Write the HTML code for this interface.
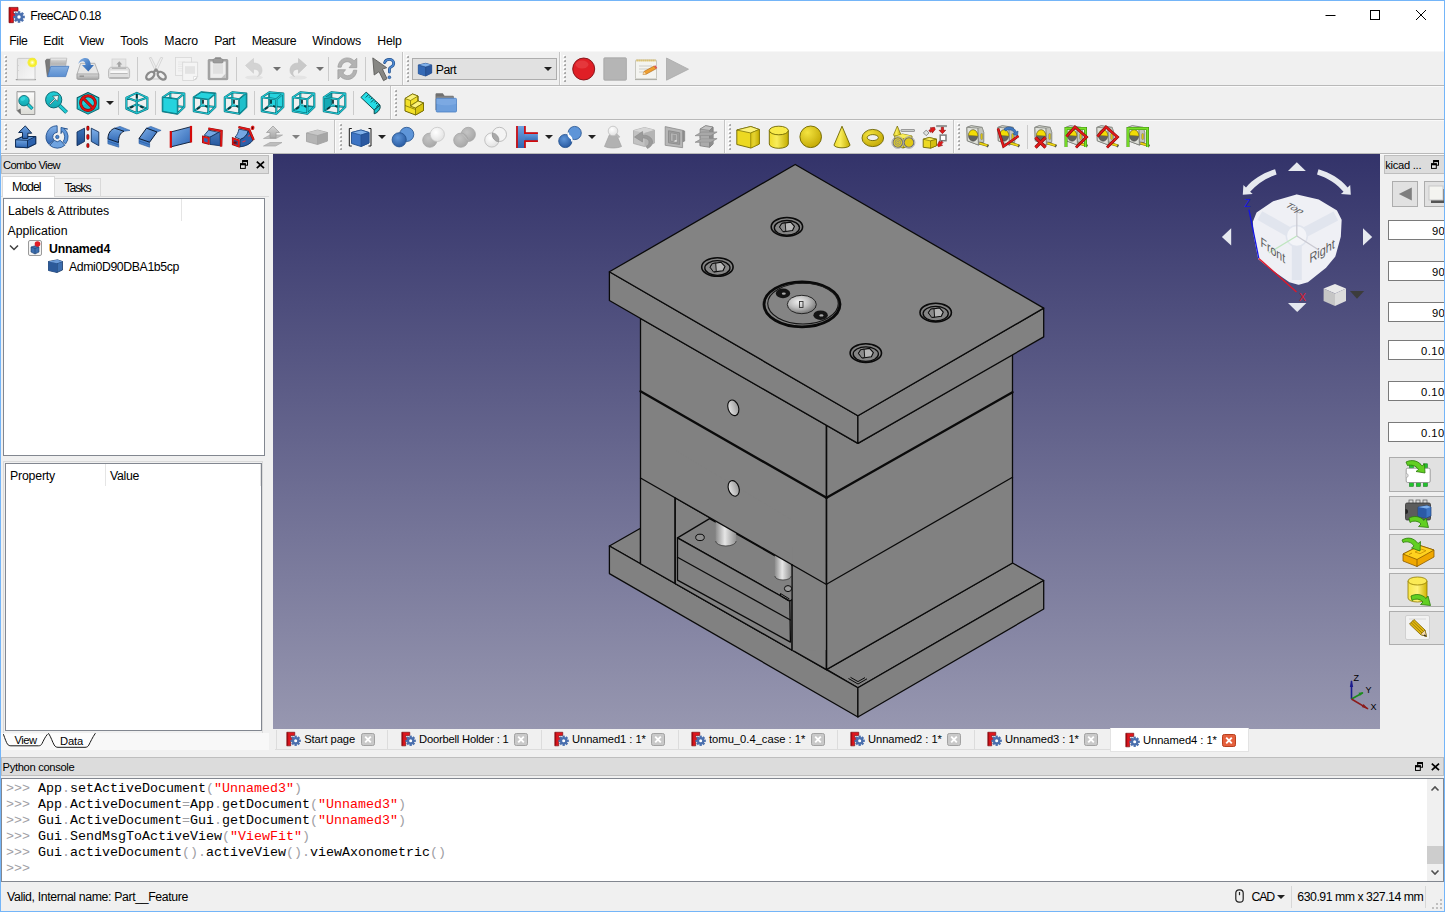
<!DOCTYPE html>
<html lang="en">
<head>
<meta charset="utf-8">
<title>FreeCAD 0.18</title>
<style>
*{box-sizing:border-box}
html,body{margin:0;padding:0}
body{width:1445px;height:912px;position:relative;overflow:hidden;background:#f0f0f0;font-family:"Liberation Sans",sans-serif;font-size:12px;color:#000}
.abs{position:absolute}
.t{position:absolute;white-space:nowrap;line-height:1}
.ui{font-size:12.3px}
.tah{font-size:11.2px}
.ic{position:absolute;width:24px;height:24px;overflow:visible}
.sep{position:absolute;width:1px;height:24px;background:#cbcbcb}
.hnd{position:absolute;width:3px;height:24px;background-image:repeating-linear-gradient(to bottom,#b8b8b8 0,#b8b8b8 1px,transparent 1px,transparent 3px)}
.dd{position:absolute;width:0;height:0;border-left:4px solid transparent;border-right:4px solid transparent;border-top:4px solid #222}
.mono{font-family:"Liberation Mono",monospace;font-size:13.33px}
.g{color:#a0a0a4}
.r{color:#f00}
</style>
</head>
<body>
<div class="abs" style="left:0px;top:0px;width:1445px;height:51px;background:#fff"></div>
<div class="abs" style="left:0px;top:51px;width:1445px;height:1px;background:#f7f7f7"></div>
<div class="abs" style="left:0px;top:85px;width:1445px;height:1px;background:#b9b9b9"></div>
<div class="abs" style="left:0px;top:86px;width:1445px;height:1px;background:#fafafa"></div>
<div class="abs" style="left:0px;top:119px;width:1445px;height:1px;background:#b9b9b9"></div>
<div class="abs" style="left:0px;top:120px;width:1445px;height:1px;background:#fafafa"></div>
<div class="abs" style="left:0px;top:153px;width:1445px;height:1px;background:#b9b9b9"></div>
<div class="abs" style="left:0px;top:154px;width:1445px;height:1px;background:#fafafa"></div>
<svg class="abs" style="left:7px;top:6px" width="18" height="18" viewBox="0 0 18 18">
<path d="M2 1.400h9v3.700H6.400v2.400h3.400v3.300H6.400v5.900H2z" fill="#e0161e" stroke="#6e090d" stroke-width=".7"/><path d="M2.300 1.700h1.300v14.700h-1.300z" fill="#9a0c12"/>
<g transform="translate(12,11)"><circle r="4.100" fill="#4a6fae"/><g fill="#4a6fae"><rect x="-1.300" y="-5.800" width="2.600" height="11.600"/><rect x="-1.300" y="-5.800" width="2.600" height="11.600" transform="rotate(45)"/><rect x="-1.300" y="-5.800" width="2.600" height="11.600" transform="rotate(90)"/><rect x="-1.300" y="-5.800" width="2.600" height="11.600" transform="rotate(135)"/></g><circle r="1.700" fill="#fff"/></g></svg>
<div class="t ui" style="top:10.39px;left:30.30px;font-size:12.3px;letter-spacing:-0.676px;">FreeCAD 0.18</div>
<svg class="abs" style="left:1300px;top:0" width="145" height="30" viewBox="0 0 145 30" fill="none" stroke="#000" stroke-width="1">
<path d="M25.5 15.5h10"/><rect x="70.5" y="10.5" width="9" height="9"/><path d="M116 10l10 10M126 10l-10 10"/></svg>
<div class="t ui" style="top:35.39px;left:9.30px;font-size:12.3px;letter-spacing:-0.455px;">File</div>
<div class="t ui" style="top:35.39px;left:43.20px;font-size:12.3px;letter-spacing:-0.199px;">Edit</div>
<div class="t ui" style="top:35.39px;left:79.00px;font-size:12.3px;letter-spacing:-0.409px;">View</div>
<div class="t ui" style="top:35.39px;left:120.30px;font-size:12.3px;letter-spacing:-0.203px;">Tools</div>
<div class="t ui" style="top:35.39px;left:164.30px;font-size:12.3px;letter-spacing:-0.074px;">Macro</div>
<div class="t ui" style="top:35.39px;left:214.20px;font-size:12.3px;letter-spacing:-0.464px;">Part</div>
<div class="t ui" style="top:35.39px;left:251.70px;font-size:12.3px;letter-spacing:-0.507px;">Measure</div>
<div class="t ui" style="top:35.39px;left:312.20px;font-size:12.3px;letter-spacing:-0.157px;">Windows</div>
<div class="t ui" style="top:35.39px;left:377.30px;font-size:12.3px;letter-spacing:-0.224px;">Help</div>
<div class="abs" style="left:0px;top:0px;width:1445px;height:1px;background:#74b5f8;z-index:50"></div>
<div class="abs" style="left:0px;top:0px;width:1px;height:912px;background:#74b5f8;z-index:50"></div>
<div class="abs" style="left:1444px;top:0px;width:1px;height:912px;background:#74b5f8;z-index:50"></div>
<div class="abs" style="left:0px;top:911px;width:1445px;height:1px;background:#74b5f8;z-index:50"></div>
<svg width="0" height="0" style="position:absolute"><defs>
<linearGradient id="gBlue" x1="0" y1="0" x2="1" y2="1"><stop offset="0" stop-color="#7fb0ea"/><stop offset="1" stop-color="#2f66b3"/></linearGradient>
<linearGradient id="gBlueV" x1="0" y1="0" x2="0" y2="1"><stop offset="0" stop-color="#6fa3e0"/><stop offset="1" stop-color="#2f66b3"/></linearGradient>
<linearGradient id="gYel" x1="0" y1="0" x2="1" y2="0"><stop offset="0" stop-color="#efdc2a"/><stop offset=".4" stop-color="#f8ec5a"/><stop offset="1" stop-color="#c4ad00"/></linearGradient>
<radialGradient id="gYelR" cx=".35" cy=".3" r=".8"><stop offset="0" stop-color="#f4e440"/><stop offset="1" stop-color="#bfa400"/></radialGradient>
<radialGradient id="gBlueR" cx=".4" cy=".35" r=".8"><stop offset="0" stop-color="#5e95d8"/><stop offset="1" stop-color="#1f4f96"/></radialGradient>
<radialGradient id="gGrayR" cx=".4" cy=".35" r=".8"><stop offset="0" stop-color="#c4c4c4"/><stop offset="1" stop-color="#a2a2a2"/></radialGradient>
<radialGradient id="gWhiteR" cx=".4" cy=".35" r=".8"><stop offset="0" stop-color="#ffffff"/><stop offset="1" stop-color="#dcdcdc"/></radialGradient>
<linearGradient id="gPage" x1="0" y1="0" x2="1" y2="1"><stop offset="0" stop-color="#e4e4e4"/><stop offset="1" stop-color="#f8f8f8"/></linearGradient>
<linearGradient id="gGrayV" x1="0" y1="0" x2="0" y2="1"><stop offset="0" stop-color="#d6d6d6"/><stop offset="1" stop-color="#a8a8a8"/></linearGradient>
<g id="tape"><path d="M1.900 2.300l4.300-1.700 10.900 1.700 1.600 5.200v9.200l-5.300 3.300-11.100-4.200z" fill="#d4d6cf" stroke="#6f716b" stroke-width=".8" stroke-linejoin="round"/><path d="M12.800 3.100l4.300-.8 1.600 5.200v9.200l-5.300 3.300z" fill="#c3c5be" stroke="#7b7d77" stroke-width=".5"/><path d="M1.900 2.300l10.900.8.600 16.900-11.100-4.200z" fill="#dfe1da" stroke="#6f716b" stroke-width=".7" stroke-linejoin="round"/><ellipse cx="8.100" cy="10.500" rx="4.600" ry="5.700" fill="#62625e" stroke="#4d4d49" stroke-width=".6"/><path d="M3.500 10.200a4.600 5.700 0 0 1 9.200 .9z" fill="#f3dc05" stroke="#8a7a00" stroke-width=".4"/><rect x="15.700" y="8.500" width="2" height="6" rx=".9" fill="#e5ca00" stroke="#77776f" stroke-width=".5"/><path d="M13.600 17l5.200 .8v1.800" fill="none" stroke="#6f716b" stroke-width=".9"/><path d="M14.600 18.200l8.600 2.500" stroke="#8a7a00" stroke-width="2.600"/><path d="M14.600 18.200l8.600 2.500" stroke="#eed512" stroke-width="1.700"/><path d="M23.400 19.800l-1.300 2.300" stroke="#55554f" stroke-width="1.400"/></g>
</defs></svg>
<svg class="abs" style="left:4px;top:55px" width="4" height="28" viewBox="0 0 4 28"><rect x="0" y="0" width="2" height="2" fill="#fff"/><rect x="1" y="1" width="2" height="2" fill="#a9a9a9"/><rect x="1" y="1" width="1" height="1" fill="#c9c9c9"/><rect x="0" y="4" width="2" height="2" fill="#fff"/><rect x="1" y="5" width="2" height="2" fill="#a9a9a9"/><rect x="1" y="5" width="1" height="1" fill="#c9c9c9"/><rect x="0" y="8" width="2" height="2" fill="#fff"/><rect x="1" y="9" width="2" height="2" fill="#a9a9a9"/><rect x="1" y="9" width="1" height="1" fill="#c9c9c9"/><rect x="0" y="12" width="2" height="2" fill="#fff"/><rect x="1" y="13" width="2" height="2" fill="#a9a9a9"/><rect x="1" y="13" width="1" height="1" fill="#c9c9c9"/><rect x="0" y="16" width="2" height="2" fill="#fff"/><rect x="1" y="17" width="2" height="2" fill="#a9a9a9"/><rect x="1" y="17" width="1" height="1" fill="#c9c9c9"/><rect x="0" y="20" width="2" height="2" fill="#fff"/><rect x="1" y="21" width="2" height="2" fill="#a9a9a9"/><rect x="1" y="21" width="1" height="1" fill="#c9c9c9"/><rect x="0" y="24" width="2" height="2" fill="#fff"/><rect x="1" y="25" width="2" height="2" fill="#a9a9a9"/><rect x="1" y="25" width="1" height="1" fill="#c9c9c9"/></svg>
<svg class="abs" style="left:406px;top:55px" width="4" height="28" viewBox="0 0 4 28"><rect x="0" y="0" width="2" height="2" fill="#fff"/><rect x="1" y="1" width="2" height="2" fill="#a9a9a9"/><rect x="1" y="1" width="1" height="1" fill="#c9c9c9"/><rect x="0" y="4" width="2" height="2" fill="#fff"/><rect x="1" y="5" width="2" height="2" fill="#a9a9a9"/><rect x="1" y="5" width="1" height="1" fill="#c9c9c9"/><rect x="0" y="8" width="2" height="2" fill="#fff"/><rect x="1" y="9" width="2" height="2" fill="#a9a9a9"/><rect x="1" y="9" width="1" height="1" fill="#c9c9c9"/><rect x="0" y="12" width="2" height="2" fill="#fff"/><rect x="1" y="13" width="2" height="2" fill="#a9a9a9"/><rect x="1" y="13" width="1" height="1" fill="#c9c9c9"/><rect x="0" y="16" width="2" height="2" fill="#fff"/><rect x="1" y="17" width="2" height="2" fill="#a9a9a9"/><rect x="1" y="17" width="1" height="1" fill="#c9c9c9"/><rect x="0" y="20" width="2" height="2" fill="#fff"/><rect x="1" y="21" width="2" height="2" fill="#a9a9a9"/><rect x="1" y="21" width="1" height="1" fill="#c9c9c9"/><rect x="0" y="24" width="2" height="2" fill="#fff"/><rect x="1" y="25" width="2" height="2" fill="#a9a9a9"/><rect x="1" y="25" width="1" height="1" fill="#c9c9c9"/></svg>
<svg class="abs" style="left:563px;top:55px" width="4" height="28" viewBox="0 0 4 28"><rect x="0" y="0" width="2" height="2" fill="#fff"/><rect x="1" y="1" width="2" height="2" fill="#a9a9a9"/><rect x="1" y="1" width="1" height="1" fill="#c9c9c9"/><rect x="0" y="4" width="2" height="2" fill="#fff"/><rect x="1" y="5" width="2" height="2" fill="#a9a9a9"/><rect x="1" y="5" width="1" height="1" fill="#c9c9c9"/><rect x="0" y="8" width="2" height="2" fill="#fff"/><rect x="1" y="9" width="2" height="2" fill="#a9a9a9"/><rect x="1" y="9" width="1" height="1" fill="#c9c9c9"/><rect x="0" y="12" width="2" height="2" fill="#fff"/><rect x="1" y="13" width="2" height="2" fill="#a9a9a9"/><rect x="1" y="13" width="1" height="1" fill="#c9c9c9"/><rect x="0" y="16" width="2" height="2" fill="#fff"/><rect x="1" y="17" width="2" height="2" fill="#a9a9a9"/><rect x="1" y="17" width="1" height="1" fill="#c9c9c9"/><rect x="0" y="20" width="2" height="2" fill="#fff"/><rect x="1" y="21" width="2" height="2" fill="#a9a9a9"/><rect x="1" y="21" width="1" height="1" fill="#c9c9c9"/><rect x="0" y="24" width="2" height="2" fill="#fff"/><rect x="1" y="25" width="2" height="2" fill="#a9a9a9"/><rect x="1" y="25" width="1" height="1" fill="#c9c9c9"/></svg>
<svg class="abs" style="left:4px;top:89px" width="4" height="28" viewBox="0 0 4 28"><rect x="0" y="0" width="2" height="2" fill="#fff"/><rect x="1" y="1" width="2" height="2" fill="#a9a9a9"/><rect x="1" y="1" width="1" height="1" fill="#c9c9c9"/><rect x="0" y="4" width="2" height="2" fill="#fff"/><rect x="1" y="5" width="2" height="2" fill="#a9a9a9"/><rect x="1" y="5" width="1" height="1" fill="#c9c9c9"/><rect x="0" y="8" width="2" height="2" fill="#fff"/><rect x="1" y="9" width="2" height="2" fill="#a9a9a9"/><rect x="1" y="9" width="1" height="1" fill="#c9c9c9"/><rect x="0" y="12" width="2" height="2" fill="#fff"/><rect x="1" y="13" width="2" height="2" fill="#a9a9a9"/><rect x="1" y="13" width="1" height="1" fill="#c9c9c9"/><rect x="0" y="16" width="2" height="2" fill="#fff"/><rect x="1" y="17" width="2" height="2" fill="#a9a9a9"/><rect x="1" y="17" width="1" height="1" fill="#c9c9c9"/><rect x="0" y="20" width="2" height="2" fill="#fff"/><rect x="1" y="21" width="2" height="2" fill="#a9a9a9"/><rect x="1" y="21" width="1" height="1" fill="#c9c9c9"/><rect x="0" y="24" width="2" height="2" fill="#fff"/><rect x="1" y="25" width="2" height="2" fill="#a9a9a9"/><rect x="1" y="25" width="1" height="1" fill="#c9c9c9"/></svg>
<svg class="abs" style="left:394px;top:89px" width="4" height="28" viewBox="0 0 4 28"><rect x="0" y="0" width="2" height="2" fill="#fff"/><rect x="1" y="1" width="2" height="2" fill="#a9a9a9"/><rect x="1" y="1" width="1" height="1" fill="#c9c9c9"/><rect x="0" y="4" width="2" height="2" fill="#fff"/><rect x="1" y="5" width="2" height="2" fill="#a9a9a9"/><rect x="1" y="5" width="1" height="1" fill="#c9c9c9"/><rect x="0" y="8" width="2" height="2" fill="#fff"/><rect x="1" y="9" width="2" height="2" fill="#a9a9a9"/><rect x="1" y="9" width="1" height="1" fill="#c9c9c9"/><rect x="0" y="12" width="2" height="2" fill="#fff"/><rect x="1" y="13" width="2" height="2" fill="#a9a9a9"/><rect x="1" y="13" width="1" height="1" fill="#c9c9c9"/><rect x="0" y="16" width="2" height="2" fill="#fff"/><rect x="1" y="17" width="2" height="2" fill="#a9a9a9"/><rect x="1" y="17" width="1" height="1" fill="#c9c9c9"/><rect x="0" y="20" width="2" height="2" fill="#fff"/><rect x="1" y="21" width="2" height="2" fill="#a9a9a9"/><rect x="1" y="21" width="1" height="1" fill="#c9c9c9"/><rect x="0" y="24" width="2" height="2" fill="#fff"/><rect x="1" y="25" width="2" height="2" fill="#a9a9a9"/><rect x="1" y="25" width="1" height="1" fill="#c9c9c9"/></svg>
<svg class="abs" style="left:4px;top:123px" width="4" height="28" viewBox="0 0 4 28"><rect x="0" y="0" width="2" height="2" fill="#fff"/><rect x="1" y="1" width="2" height="2" fill="#a9a9a9"/><rect x="1" y="1" width="1" height="1" fill="#c9c9c9"/><rect x="0" y="4" width="2" height="2" fill="#fff"/><rect x="1" y="5" width="2" height="2" fill="#a9a9a9"/><rect x="1" y="5" width="1" height="1" fill="#c9c9c9"/><rect x="0" y="8" width="2" height="2" fill="#fff"/><rect x="1" y="9" width="2" height="2" fill="#a9a9a9"/><rect x="1" y="9" width="1" height="1" fill="#c9c9c9"/><rect x="0" y="12" width="2" height="2" fill="#fff"/><rect x="1" y="13" width="2" height="2" fill="#a9a9a9"/><rect x="1" y="13" width="1" height="1" fill="#c9c9c9"/><rect x="0" y="16" width="2" height="2" fill="#fff"/><rect x="1" y="17" width="2" height="2" fill="#a9a9a9"/><rect x="1" y="17" width="1" height="1" fill="#c9c9c9"/><rect x="0" y="20" width="2" height="2" fill="#fff"/><rect x="1" y="21" width="2" height="2" fill="#a9a9a9"/><rect x="1" y="21" width="1" height="1" fill="#c9c9c9"/><rect x="0" y="24" width="2" height="2" fill="#fff"/><rect x="1" y="25" width="2" height="2" fill="#a9a9a9"/><rect x="1" y="25" width="1" height="1" fill="#c9c9c9"/></svg>
<svg class="abs" style="left:339px;top:123px" width="4" height="28" viewBox="0 0 4 28"><rect x="0" y="0" width="2" height="2" fill="#fff"/><rect x="1" y="1" width="2" height="2" fill="#a9a9a9"/><rect x="1" y="1" width="1" height="1" fill="#c9c9c9"/><rect x="0" y="4" width="2" height="2" fill="#fff"/><rect x="1" y="5" width="2" height="2" fill="#a9a9a9"/><rect x="1" y="5" width="1" height="1" fill="#c9c9c9"/><rect x="0" y="8" width="2" height="2" fill="#fff"/><rect x="1" y="9" width="2" height="2" fill="#a9a9a9"/><rect x="1" y="9" width="1" height="1" fill="#c9c9c9"/><rect x="0" y="12" width="2" height="2" fill="#fff"/><rect x="1" y="13" width="2" height="2" fill="#a9a9a9"/><rect x="1" y="13" width="1" height="1" fill="#c9c9c9"/><rect x="0" y="16" width="2" height="2" fill="#fff"/><rect x="1" y="17" width="2" height="2" fill="#a9a9a9"/><rect x="1" y="17" width="1" height="1" fill="#c9c9c9"/><rect x="0" y="20" width="2" height="2" fill="#fff"/><rect x="1" y="21" width="2" height="2" fill="#a9a9a9"/><rect x="1" y="21" width="1" height="1" fill="#c9c9c9"/><rect x="0" y="24" width="2" height="2" fill="#fff"/><rect x="1" y="25" width="2" height="2" fill="#a9a9a9"/><rect x="1" y="25" width="1" height="1" fill="#c9c9c9"/></svg>
<svg class="abs" style="left:728px;top:123px" width="4" height="28" viewBox="0 0 4 28"><rect x="0" y="0" width="2" height="2" fill="#fff"/><rect x="1" y="1" width="2" height="2" fill="#a9a9a9"/><rect x="1" y="1" width="1" height="1" fill="#c9c9c9"/><rect x="0" y="4" width="2" height="2" fill="#fff"/><rect x="1" y="5" width="2" height="2" fill="#a9a9a9"/><rect x="1" y="5" width="1" height="1" fill="#c9c9c9"/><rect x="0" y="8" width="2" height="2" fill="#fff"/><rect x="1" y="9" width="2" height="2" fill="#a9a9a9"/><rect x="1" y="9" width="1" height="1" fill="#c9c9c9"/><rect x="0" y="12" width="2" height="2" fill="#fff"/><rect x="1" y="13" width="2" height="2" fill="#a9a9a9"/><rect x="1" y="13" width="1" height="1" fill="#c9c9c9"/><rect x="0" y="16" width="2" height="2" fill="#fff"/><rect x="1" y="17" width="2" height="2" fill="#a9a9a9"/><rect x="1" y="17" width="1" height="1" fill="#c9c9c9"/><rect x="0" y="20" width="2" height="2" fill="#fff"/><rect x="1" y="21" width="2" height="2" fill="#a9a9a9"/><rect x="1" y="21" width="1" height="1" fill="#c9c9c9"/><rect x="0" y="24" width="2" height="2" fill="#fff"/><rect x="1" y="25" width="2" height="2" fill="#a9a9a9"/><rect x="1" y="25" width="1" height="1" fill="#c9c9c9"/></svg>
<svg class="abs" style="left:957px;top:123px" width="4" height="28" viewBox="0 0 4 28"><rect x="0" y="0" width="2" height="2" fill="#fff"/><rect x="1" y="1" width="2" height="2" fill="#a9a9a9"/><rect x="1" y="1" width="1" height="1" fill="#c9c9c9"/><rect x="0" y="4" width="2" height="2" fill="#fff"/><rect x="1" y="5" width="2" height="2" fill="#a9a9a9"/><rect x="1" y="5" width="1" height="1" fill="#c9c9c9"/><rect x="0" y="8" width="2" height="2" fill="#fff"/><rect x="1" y="9" width="2" height="2" fill="#a9a9a9"/><rect x="1" y="9" width="1" height="1" fill="#c9c9c9"/><rect x="0" y="12" width="2" height="2" fill="#fff"/><rect x="1" y="13" width="2" height="2" fill="#a9a9a9"/><rect x="1" y="13" width="1" height="1" fill="#c9c9c9"/><rect x="0" y="16" width="2" height="2" fill="#fff"/><rect x="1" y="17" width="2" height="2" fill="#a9a9a9"/><rect x="1" y="17" width="1" height="1" fill="#c9c9c9"/><rect x="0" y="20" width="2" height="2" fill="#fff"/><rect x="1" y="21" width="2" height="2" fill="#a9a9a9"/><rect x="1" y="21" width="1" height="1" fill="#c9c9c9"/><rect x="0" y="24" width="2" height="2" fill="#fff"/><rect x="1" y="25" width="2" height="2" fill="#a9a9a9"/><rect x="1" y="25" width="1" height="1" fill="#c9c9c9"/></svg>
<div class="sep" style="left:137px;top:57px"></div>
<div class="sep" style="left:236px;top:57px"></div>
<div class="sep" style="left:328px;top:57px"></div>
<div class="sep" style="left:365px;top:57px"></div>
<div class="sep" style="left:118px;top:91px"></div>
<div class="sep" style="left:155px;top:91px"></div>
<div class="sep" style="left:254px;top:91px"></div>
<div class="sep" style="left:353px;top:91px"></div>
<div class="sep" style="left:1027px;top:125px"></div>
<div class="abs" style="left:402px;top:52px;width:1px;height:33px;background:#c4c4c4"></div>
<div class="abs" style="left:403px;top:52px;width:1px;height:33px;background:#fbfbfb"></div>
<div class="abs" style="left:559px;top:52px;width:1px;height:33px;background:#c4c4c4"></div>
<div class="abs" style="left:560px;top:52px;width:1px;height:33px;background:#fbfbfb"></div>
<div class="abs" style="left:390px;top:86px;width:1px;height:33px;background:#c4c4c4"></div>
<div class="abs" style="left:391px;top:86px;width:1px;height:33px;background:#fbfbfb"></div>
<div class="abs" style="left:334px;top:120px;width:1px;height:33px;background:#c4c4c4"></div>
<div class="abs" style="left:335px;top:120px;width:1px;height:33px;background:#fbfbfb"></div>
<div class="abs" style="left:724px;top:120px;width:1px;height:33px;background:#c4c4c4"></div>
<div class="abs" style="left:725px;top:120px;width:1px;height:33px;background:#fbfbfb"></div>
<div class="abs" style="left:953px;top:120px;width:1px;height:33px;background:#c4c4c4"></div>
<div class="abs" style="left:954px;top:120px;width:1px;height:33px;background:#fbfbfb"></div>
<svg class="ic" style="left:14px;top:57px" viewBox="0 0 24 24"><defs><radialGradient id="nwG"><stop offset="0" stop-color="#fff"/><stop offset=".25" stop-color="#fdf98a"/><stop offset=".6" stop-color="#f6ee22"/><stop offset=".85" stop-color="#f6ee22" stop-opacity=".75"/><stop offset="1" stop-color="#f6ee22" stop-opacity="0"/></radialGradient></defs><path d="M2.200 22.600h19.300" stroke="#9e9e9e" stroke-width="1.100" stroke-linecap="round"/><rect x="3.400" y="1.400" width="17.600" height="20.900" rx=".8" fill="url(#gPage)" stroke="#c6c6c6" stroke-width=".9"/><path d="M4 8.500h.9M4 13.500h.9" stroke="#cfcfcf" stroke-width=".8"/><circle cx="18.300" cy="5.500" r="5.300" fill="url(#nwG)"/></svg>
<svg class="ic" style="left:45px;top:57px" viewBox="0 0 24 24"><defs><linearGradient id="opA" x1="0" y1="0" x2="0" y2="1"><stop offset="0" stop-color="#fdfdfd"/><stop offset=".3" stop-color="#c9c9c9"/><stop offset=".7" stop-color="#b4b4b4"/><stop offset="1" stop-color="#d8d8d8"/></linearGradient><linearGradient id="opB" x1="0" y1="0" x2="0" y2="1"><stop offset="0" stop-color="#86afe0"/><stop offset="1" stop-color="#5b8fd1"/></linearGradient></defs><path d="M.4 3.800l1.200-1.600h3.800l-1 17.400h-2.100z" fill="#7a7a7a" stroke="#5e5e5e" stroke-width=".6" stroke-linejoin="round"/><path d="M5.400 1.200h16.400l-1.200 8.500h-15.400z" fill="url(#opA)" stroke="#b0b0b0" stroke-width=".7" stroke-linejoin="round"/><path d="M5.800 9.300h18.100l-3.300 10.300h-17.900z" fill="url(#opB)" stroke="#4678bd" stroke-width=".8" stroke-linejoin="round"/></svg>
<svg class="ic" style="left:76px;top:57px" viewBox="0 0 24 24"><defs><linearGradient id="svA" x1="0" y1="0" x2="1" y2="1"><stop offset="0" stop-color="#8fb6e6"/><stop offset=".5" stop-color="#4a82c8"/><stop offset="1" stop-color="#2a5fa8"/></linearGradient></defs><path d="M4.600 6.300h14.200l3.900 10.600v4.400q0 1-1 1h-19.600q-1 0-1-1v-4.400z" fill="#e6e6e6" stroke="#a4a4a4" stroke-width=".8" stroke-linejoin="round"/><path d="M1.100 16.900h21.600v4.400q0 1-1 1h-19.600q-1 0-1-1z" fill="url(#gGrayV)" stroke="#9a9a9a" stroke-width=".7"/><path d="M3.500 19.200h4.500" stroke="#8e8e8e" stroke-width="1.300"/><path d="M2.200 7c1.200-4 4-6.300 7.400-6.100 3 .2 4.800 2.500 5.200 7.100h3.100l-5.600 6.400-6.400-6.400h3.600c0-2.500-1-3.800-2.700-3.800-1.700 0-3.300 1-4.600 2.800z" fill="url(#svA)"/></svg>
<svg class="ic" style="left:107px;top:57px" viewBox="0 0 24 24"><rect x="5" y="2" width="13.900" height="9" fill="#e6e6e6" stroke="#d2d2d2" stroke-width=".8"/><path d="M12.300 4.300l3 3.300h-1.800v2.600h-2.400v-2.600h-1.800z" fill="#a4a4a4"/><path d="M3.500 10.300h17.100q2 1.200 2 3.500v5.700q0 2-2 2h-17.100q-2 0-2-2v-5.700q0-2.300 2-3.500z" fill="#dedede" stroke="#b4b4b4" stroke-width=".8"/><path d="M5 10.800h14v1.200h-14z" fill="#b8b8b8"/><path d="M3.300 13.600h17.300v2.600h-17.300z" fill="#f8f8f8"/><path d="M3.300 16.500h17.300" stroke="#b0b0b0" stroke-width=".8"/><path d="M2.500 20.800h19.100" stroke="#b2b2b2" stroke-width="1.400"/></svg>
<svg class="ic" style="left:143px;top:57px" viewBox="0 0 24 24"><path d="M6.300 .8l1.900-.4 6.300 12.800-1.800 1.600z" fill="#ededed" stroke="#c4c4c4" stroke-width=".6"/><path d="M19.700 .8l-1.900-.4-6.300 12.800 1.800 1.600z" fill="#f1f1f1" stroke="#c4c4c4" stroke-width=".6"/><ellipse cx="12.800" cy="22" rx="5" ry="1" fill="#dcdcdc"/><ellipse cx="7.300" cy="18.700" rx="4.700" ry="3" transform="rotate(-42 7.300 18.700)" fill="none" stroke="#8b8b8b" stroke-width="2.400"/><ellipse cx="18.700" cy="18.700" rx="4.700" ry="3" transform="rotate(42 18.700 18.700)" fill="none" stroke="#8b8b8b" stroke-width="2.400"/><path d="M10.300 15.800l2.700-3.400 2.700 3.400" stroke="#8b8b8b" stroke-width="2.400" fill="none" stroke-linejoin="round"/></svg>
<svg class="ic" style="left:174px;top:57px" viewBox="0 0 24 24"><rect x="1.400" y=".5" width="16" height="18" fill="#f3f3f3" stroke="#d6d6d6" stroke-width=".8"/><path d="M4 5h7M4 7.200h7M4 9.400h7M4 11.600h7M4 13.800h5" stroke="#e2e2e2" stroke-width=".7"/><path d="M8.600 5.200h15v14.300l-4 4h-11z" fill="#f4f4f4" stroke="#d4d4d4" stroke-width=".8"/><rect x="11" y="9.200" width="10" height="7.600" fill="#e3e3e3"/><path d="M23.600 19.500l-4 4v-4z" fill="#fdfdfd" stroke="#d0d0d0" stroke-width=".6"/><path d="M23.400 19.700l-3.600 3.600c2.500-.3 3.500-1.300 3.600-3.600z" fill="#cfcfcf"/></svg>
<svg class="ic" style="left:205px;top:57px" viewBox="0 0 24 24"><rect x="3.200" y="2.500" width="19.600" height="20.200" rx=".8" fill="#a3a3a3" stroke="#959595" stroke-width=".8"/><rect x="5.300" y="4.500" width="15.400" height="16.400" fill="#eeeeee"/><rect x="8" y="7.200" width="10" height="9.600" fill="#e0e0e0"/><path d="M20.700 16.500v4.400h-4.400z" fill="#c2c2c2"/><path d="M8 3.600c0-1.300.8-2.100 2.100-2.100h5.800c1.300 0 2.100.8 2.100 2.100v1.500c0 .6-.4 1-1 1h-8c-.6 0-1-.4-1-1z" fill="#9c9c9c" stroke="#868686" stroke-width=".6"/><rect x="10" y=".2" width="6" height="1.800" rx=".5" fill="#8a8a8a"/></svg>
<svg class="ic" style="left:242px;top:57px" viewBox="0 0 24 24"><ellipse cx="12" cy="20.500" rx="9" ry="2" fill="#e4e4e4"/><path d="M3.500 8.500l8-7v4.500c6 0 8.500 3.500 8.500 7.500 0 3-2 5-4.500 6 1.500-1.500 2-3 1.500-4.500-.6-2-2.500-2.800-5.500-2.800v4z" fill="#d3d3d3" stroke="#cbcbcb" stroke-width=".6" stroke-linejoin="round"/></svg>
<svg class="ic" style="left:286px;top:57px" viewBox="0 0 24 24"><ellipse cx="12" cy="20.500" rx="9" ry="2" fill="#e4e4e4"/><path d="M20.500 8.500l-8-7v4.500c-6 0-8.500 3.500-8.500 7.500 0 3 2 5 4.500 6-1.500-1.500-2-3-1.500-4.500.6-2 2.500-2.800 5.500-2.800v4z" fill="#c9c9c9" stroke="#bfbfbf" stroke-width=".6" stroke-linejoin="round"/></svg>
<svg class="ic" style="left:335px;top:57px" viewBox="0 0 24 24"><g id="rfa"><path d="M2.900 10.200C3.300 4.600 7.400 .9 12.200 .9c2.900 0 5.200 1.100 6.900 2.900l2.700-2.500v9.400h-7.700l2.700-3.300c-1.200-1.700-2.700-2.700-4.700-2.700-3 0-5.300 2.100-5.900 5.500z" fill="#b3b3b3" stroke="#9b9b9b" stroke-width=".7" stroke-linejoin="round"/></g><use href="#rfa" transform="rotate(180 12.350 11.700)"/></svg>
<svg class="ic" style="left:371px;top:57px" viewBox="0 0 24 24"><path d="M1.800 .9l13.900 9.800-4.300 1.400 4.600 9.600-3.500 2-4.500-9.100-4.800 3.400z" fill="#878784" stroke="#5c5c5a" stroke-width=".9" stroke-linejoin="round"/><path d="M13.600 5.600c.7-2 2.400-3.200 4.700-3.200 2.600 0 4.400 1.600 4.400 3.900 0 1.900-1.200 3-2.700 3.700-1.200.5-1.600 1-1.600 2.200v2.800" fill="none" stroke="#1f4e8c" stroke-width="2.800" stroke-linecap="round" stroke-linejoin="round"/><path d="M13.600 5.600c.7-2 2.400-3.200 4.700-3.200 2.600 0 4.400 1.600 4.400 3.900 0 1.900-1.200 3-2.700 3.700-1.200.5-1.600 1-1.600 2.200v2.800" fill="none" stroke="#4f8ad2" stroke-width="1.500" stroke-linecap="round" stroke-linejoin="round"/><circle cx="18.400" cy="20.300" r="1.400" fill="#4f8ad2" stroke="#1f4e8c" stroke-width=".7"/></svg>
<div class="dd" style="left:273px;top:67px;border-top-color:#707070"></div>
<div class="dd" style="left:316px;top:67px;border-top-color:#707070"></div>
<div class="abs" style="left:412px;top:58px;width:145px;height:22px;background:#e1e1e1;border:1px solid #adadad"></div>
<svg class="abs" style="left:417px;top:61px" width="16" height="16" viewBox="0 0 24 24"><path d="M2 6l11-2.500 9 2.500v12l-9 4.500-11-3.500z" fill="#3d74c4" stroke="#1c3f78" stroke-width="1.200" stroke-linejoin="round"/><path d="M2 6l11 3v13.500l-11-3.500z" fill="#3469b5"/><path d="M13 9l9-3v12l-9 4.500z" fill="#2a58a0"/><path d="M2 6l11-2.500 9 2.500-9 3z" fill="#7fb0ea"/><path d="M2 6l11 3 9-3M13 9v13.500" stroke="#1c3f78" stroke-width=".9" fill="none"/></svg>
<div class="t ui" style="top:63.89px;left:435.70px;font-size:12.3px;letter-spacing:-0.514px;">Part</div>
<div class="dd" style="left:543.500px;top:67px"></div>
<svg class="ic" style="left:572px;top:57px" viewBox="0 0 24 24"><circle cx="11.700" cy="12" r="11" fill="#df1f26" stroke="#7e1015" stroke-width=".9"/><ellipse cx="10" cy="7.500" rx="6.500" ry="4" fill="#ea4a4f" opacity=".55"/></svg>
<svg class="ic" style="left:603px;top:57px" viewBox="0 0 24 24"><rect x=".8" y=".8" width="22.600" height="22.400" rx="1" fill="#b5b5b5" stroke="#a5a5a5" stroke-width=".8"/></svg>
<svg class="ic" style="left:634px;top:57px" viewBox="0 0 24 24"><rect x="1.500" y="3" width="21" height="19" rx="1" fill="#f4f4f0" stroke="#bdbdb5" stroke-width=".8"/><path d="M1 22.500h22" stroke="#b0b0a8" stroke-width="1.200"/><path d="M2.500 3.500h19" stroke="#d9b64a" stroke-width="2.200" stroke-dasharray="1.200 .8"/><path d="M5 9h13M5 12h11M5 15h7" stroke="#c9c9c4" stroke-width=".9"/><path d="M9 17.500l1-3 10-5.500 2 2.800-10 5.500z" fill="#f0a030" stroke="#a86010" stroke-width=".6"/><path d="M20 9l1.300-.7 2 2.800-1.300.7z" fill="#e05050"/><path d="M9 17.500l1-3 2 2.800z" fill="#f4dcb0"/></svg>
<svg class="ic" style="left:665px;top:57px" viewBox="0 0 24 24"><path d="M1.500 1l22 11.200-22 11z" fill="#b7b7b7" stroke="#a9a9a9" stroke-width=".8" stroke-linejoin="round"/></svg>
<svg class="ic" style="left:14px;top:91px" viewBox="0 0 24 24"><defs><linearGradient id="faP" x1="0" y1="0" x2="0" y2="1"><stop offset="0" stop-color="#fdfdfd"/><stop offset="1" stop-color="#dcdcd6"/></linearGradient><linearGradient id="teG" x1="0" y1="0" x2="0" y2="1"><stop offset="0" stop-color="#22d0d8"/><stop offset="1" stop-color="#13a6b0"/></linearGradient></defs><path d="M3 .5h17.800v23h-13.800l-4-4z" fill="url(#faP)" stroke="#8f8f8f" stroke-width=".9" stroke-linejoin="round"/><path d="M3.500 1h16.800" stroke="#b9b9b9" stroke-width="1"/><path d="M3 19.500l3.600-2 .4 6z" fill="#6e6e6e"/><path d="M13.800 13.300l4.600 4.600" stroke="#0a6a73" stroke-width="3.400"/><path d="M13.400 12.900l4.800 4.800" stroke="#1fc9d2" stroke-width="2.200"/><circle cx="10" cy="9.700" r="5.200" fill="url(#teG)" stroke="#0a6a73" stroke-width=".9"/><ellipse cx="9" cy="8" rx="2.600" ry="1.700" fill="#4fe0e8" opacity=".55" transform="rotate(-30 9 8)"/></svg>
<svg class="ic" style="left:45px;top:91px" viewBox="0 0 24 24"><path d="M14.300 14.400l7.300 7" stroke="#0a6a73" stroke-width="4"/><path d="M13.800 13.900l7.600 7.300" stroke="#1fc9d2" stroke-width="2.700"/><circle cx="8.700" cy="8.800" r="8.100" fill="url(#teG)" stroke="#0a6a73" stroke-width="1"/><path d="M4.300 12.700l5.500-5.300-2.200-2.200 6-.8-1 6-2-2-5.400 5.200z" fill="#f6f6f6" stroke="#2a5a5e" stroke-width=".7" stroke-linejoin="round"/></svg>
<svg class="ic" style="left:76px;top:91px" viewBox="0 0 24 24"><path d="M12 1.500l10.800 5.200v11l-10.800 5.300-10.800-5.300V6.700z" fill="#22d2dc" stroke="#0a5a62" stroke-width="1.100" stroke-linejoin="round"/><path d="M.8 17.400l11.200-5.600 11.200 5.600-11.200 5.800z" fill="#17aeb9" opacity=".6"/><circle cx="12" cy="12.100" r="7.400" fill="none" stroke="#7a0808" stroke-width="2.900"/><path d="M6.800 6.900l10.400 10.400" stroke="#7a0808" stroke-width="2.900"/><circle cx="12" cy="12.100" r="7.400" fill="none" stroke="#e01212" stroke-width="1.900"/><path d="M6.800 6.900l10.400 10.400" stroke="#e01212" stroke-width="1.900"/></svg>
<svg class="ic" style="left:125px;top:91px" viewBox="0 0 24 24"><path d="M11.800 1.900v11.600M1.400 17.800l10.400-4.400 10.600 4.400" stroke="#0a6a73" stroke-width="2" fill="none"/><path d="M11.800 1.900v11.600M1.400 17.800l10.400-4.400 10.600 4.400" stroke="#20c5d0" stroke-width="1" fill="none"/><path d="M11.800 3.300v3.200" stroke="#0a3438" stroke-width="1.800" stroke-linecap="round"/><path d="M5.800 16.500l2-.8M17.800 16.500l-2-.8" stroke="#0a3438" stroke-width="1.900" stroke-linecap="round"/><path d="M11.800 1.900l10.600 4.700v11.200l-10.600 4.500-10.400-4.500V6.600zM1.400 6.600l10.400 3.600 10.600-3.600M11.800 10.200v12" stroke="#0a6a73" stroke-width="2.100" fill="none" stroke-linejoin="round"/><path d="M11.800 1.900l10.600 4.700v11.200l-10.600 4.500-10.400-4.500V6.600zM1.400 6.600l10.400 3.600 10.600-3.600M11.800 10.200v12" stroke="#20c5d0" stroke-width="1.100" fill="none" stroke-linejoin="round"/></svg>
<svg class="ic" style="left:161px;top:91px" viewBox="0 0 24 24"><path d="M9.3 1.3L9.3 14.5L23.3 16M9.3 14.5L1.8 20.3" stroke="#0a6a73" stroke-width="2" fill="none" stroke-linejoin="round"/><path d="M9.3 1.3L9.3 14.5L23.3 16M9.3 14.5L1.8 20.3" stroke="#20c5d0" stroke-width="1" fill="none" stroke-linejoin="round"/><path d="M1.8 6.3L16.3 8.3L16.3 22.8L1.8 20.3ZM1.8 6.3L9.3 1.3L23.3 2.5L23.3 16L16.3 22.8M16.3 8.3L23.3 2.5" stroke="#0a6a73" stroke-width="2.100" fill="none" stroke-linejoin="round"/><path d="M1.8 6.3L16.3 8.3L16.3 22.8L1.8 20.3ZM1.8 6.3L9.3 1.3L23.3 2.5L23.3 16L16.3 22.8M16.3 8.3L23.3 2.5" stroke="#20c5d0" stroke-width="1.100" fill="none" stroke-linejoin="round"/><polygon points="1.8,6.3 16.3,8.3 16.3,22.8 1.8,20.3" fill="#25d3de" stroke="#0a6a73" stroke-width=".8" stroke-linejoin="round"/></svg>
<svg class="ic" style="left:192px;top:91px" viewBox="0 0 24 24"><path d="M9.3 1.3L9.3 14.5L23.3 16M9.3 14.5L1.8 20.3" stroke="#0a6a73" stroke-width="2" fill="none" stroke-linejoin="round"/><path d="M9.3 1.3L9.3 14.5L23.3 16M9.3 14.5L1.8 20.3" stroke="#20c5d0" stroke-width="1" fill="none" stroke-linejoin="round"/><path d="M11 12v-2.500" stroke="#0a3438" stroke-width="1.800" stroke-linecap="round"/><path d="M7.500 16.500l-1.800 1.200" stroke="#0a3438" stroke-width="1.800" stroke-linecap="round"/><path d="M13.800 15.200l1.500.7" stroke="#0a3438" stroke-width="1.800" stroke-linecap="round"/><path d="M11 13.500l-2 1.500M11 13.500l1.800 1" stroke="#35d7e2" stroke-width="1"/><path d="M1.8 6.3L16.3 8.3L16.3 22.8L1.8 20.3ZM1.8 6.3L9.3 1.3L23.3 2.5L23.3 16L16.3 22.8M16.3 8.3L23.3 2.5" stroke="#0a6a73" stroke-width="2.100" fill="none" stroke-linejoin="round"/><path d="M1.8 6.3L16.3 8.3L16.3 22.8L1.8 20.3ZM1.8 6.3L9.3 1.3L23.3 2.5L23.3 16L16.3 22.8M16.3 8.3L23.3 2.5" stroke="#20c5d0" stroke-width="1.100" fill="none" stroke-linejoin="round"/><polygon points="1.8,6.3 16.3,8.3 23.3,2.5 9.3,1.3" fill="#25d3de" stroke="#0a6a73" stroke-width=".8" stroke-linejoin="round"/></svg>
<svg class="ic" style="left:223px;top:91px" viewBox="0 0 24 24"><path d="M9.3 1.3L9.3 14.5L23.3 16M9.3 14.5L1.8 20.3" stroke="#0a6a73" stroke-width="2" fill="none" stroke-linejoin="round"/><path d="M9.3 1.3L9.3 14.5L23.3 16M9.3 14.5L1.8 20.3" stroke="#20c5d0" stroke-width="1" fill="none" stroke-linejoin="round"/><path d="M11 12v-2.500" stroke="#0a3438" stroke-width="1.800" stroke-linecap="round"/><path d="M7.500 16.500l-1.800 1.200" stroke="#0a3438" stroke-width="1.800" stroke-linecap="round"/><path d="M13.800 15.200l1.500.7" stroke="#0a3438" stroke-width="1.800" stroke-linecap="round"/><path d="M11 13.500l-2 1.500M11 13.500l1.800 1" stroke="#35d7e2" stroke-width="1"/><path d="M1.8 6.3L16.3 8.3L16.3 22.8L1.8 20.3ZM1.8 6.3L9.3 1.3L23.3 2.5L23.3 16L16.3 22.8M16.3 8.3L23.3 2.5" stroke="#0a6a73" stroke-width="2.100" fill="none" stroke-linejoin="round"/><path d="M1.8 6.3L16.3 8.3L16.3 22.8L1.8 20.3ZM1.8 6.3L9.3 1.3L23.3 2.5L23.3 16L16.3 22.8M16.3 8.3L23.3 2.5" stroke="#20c5d0" stroke-width="1.100" fill="none" stroke-linejoin="round"/><polygon points="16.3,8.3 23.3,2.5 23.3,16 16.3,22.8" fill="#1fc0cb" stroke="#0a6a73" stroke-width=".8" stroke-linejoin="round"/></svg>
<svg class="ic" style="left:260px;top:91px" viewBox="0 0 24 24"><path d="M9.3 1.3L9.3 14.5L23.3 16M9.3 14.5L1.8 20.3" stroke="#0a6a73" stroke-width="2" fill="none" stroke-linejoin="round"/><path d="M9.3 1.3L9.3 14.5L23.3 16M9.3 14.5L1.8 20.3" stroke="#20c5d0" stroke-width="1" fill="none" stroke-linejoin="round"/><polygon points="9.3,1.3 23.3,2.5 23.3,16 9.3,14.5" fill="#25d3de" stroke="#0a6a73" stroke-width=".8"/><path d="M11 12v-2.500" stroke="#0a3438" stroke-width="1.800" stroke-linecap="round"/><path d="M7.500 16.500l-1.800 1.200" stroke="#0a3438" stroke-width="1.800" stroke-linecap="round"/><path d="M13.800 15.200l1.500.7" stroke="#0a3438" stroke-width="1.800" stroke-linecap="round"/><path d="M11 13.500l-2 1.500M11 13.500l1.800 1" stroke="#35d7e2" stroke-width="1"/><path d="M1.8 6.3L16.3 8.3L16.3 22.8L1.8 20.3ZM1.8 6.3L9.3 1.3L23.3 2.5L23.3 16L16.3 22.8M16.3 8.3L23.3 2.5" stroke="#0a6a73" stroke-width="2.100" fill="none" stroke-linejoin="round"/><path d="M1.8 6.3L16.3 8.3L16.3 22.8L1.8 20.3ZM1.8 6.3L9.3 1.3L23.3 2.5L23.3 16L16.3 22.8M16.3 8.3L23.3 2.5" stroke="#20c5d0" stroke-width="1.100" fill="none" stroke-linejoin="round"/></svg>
<svg class="ic" style="left:291px;top:91px" viewBox="0 0 24 24"><path d="M9.3 1.3L9.3 14.5L23.3 16M9.3 14.5L1.8 20.3" stroke="#0a6a73" stroke-width="2" fill="none" stroke-linejoin="round"/><path d="M9.3 1.3L9.3 14.5L23.3 16M9.3 14.5L1.8 20.3" stroke="#20c5d0" stroke-width="1" fill="none" stroke-linejoin="round"/><polygon points="1.8,20.3 16.3,22.8 23.3,16 9.3,14.5" fill="#25d3de" stroke="#0a6a73" stroke-width=".8"/><path d="M11 12v-2.500" stroke="#0a3438" stroke-width="1.800" stroke-linecap="round"/><path d="M7.500 16.500l-1.800 1.200" stroke="#0a3438" stroke-width="1.800" stroke-linecap="round"/><path d="M13.800 15.200l1.500.7" stroke="#0a3438" stroke-width="1.800" stroke-linecap="round"/><path d="M11 13.500l-2 1.500M11 13.500l1.800 1" stroke="#35d7e2" stroke-width="1"/><path d="M1.8 6.3L16.3 8.3L16.3 22.8L1.8 20.3ZM1.8 6.3L9.3 1.3L23.3 2.5L23.3 16L16.3 22.8M16.3 8.3L23.3 2.5" stroke="#0a6a73" stroke-width="2.100" fill="none" stroke-linejoin="round"/><path d="M1.8 6.3L16.3 8.3L16.3 22.8L1.8 20.3ZM1.8 6.3L9.3 1.3L23.3 2.5L23.3 16L16.3 22.8M16.3 8.3L23.3 2.5" stroke="#20c5d0" stroke-width="1.100" fill="none" stroke-linejoin="round"/></svg>
<svg class="ic" style="left:322px;top:91px" viewBox="0 0 24 24"><path d="M9.3 1.3L9.3 14.5L23.3 16M9.3 14.5L1.8 20.3" stroke="#0a6a73" stroke-width="2" fill="none" stroke-linejoin="round"/><path d="M9.3 1.3L9.3 14.5L23.3 16M9.3 14.5L1.8 20.3" stroke="#20c5d0" stroke-width="1" fill="none" stroke-linejoin="round"/><polygon points="1.8,6.3 9.3,1.3 9.3,14.5 1.8,20.3" fill="#16aab5" stroke="#0a6a73" stroke-width=".8"/><path d="M11 12v-2.500" stroke="#0a3438" stroke-width="1.800" stroke-linecap="round"/><path d="M7.500 16.500l-1.800 1.200" stroke="#0a3438" stroke-width="1.800" stroke-linecap="round"/><path d="M13.800 15.200l1.500.7" stroke="#0a3438" stroke-width="1.800" stroke-linecap="round"/><path d="M11 13.500l-2 1.500M11 13.500l1.800 1" stroke="#35d7e2" stroke-width="1"/><path d="M1.8 6.3L16.3 8.3L16.3 22.8L1.8 20.3ZM1.8 6.3L9.3 1.3L23.3 2.5L23.3 16L16.3 22.8M16.3 8.3L23.3 2.5" stroke="#0a6a73" stroke-width="2.100" fill="none" stroke-linejoin="round"/><path d="M1.8 6.3L16.3 8.3L16.3 22.8L1.8 20.3ZM1.8 6.3L9.3 1.3L23.3 2.5L23.3 16L16.3 22.8M16.3 8.3L23.3 2.5" stroke="#20c5d0" stroke-width="1.100" fill="none" stroke-linejoin="round"/></svg>
<svg class="ic" style="left:359px;top:91px" viewBox="0 0 24 24"><path d="M7.200 1.100L1.900 6.400 15.200 19 21 14.100z" fill="#25dde6" stroke="#063d42" stroke-width=".9" stroke-linejoin="round"/><path d="M15.200 19L21 14.100l.2 2.600c-.7 2.800-3.200 5.300-6 6.100z" fill="#17c0ca" stroke="#063d42" stroke-width=".9" stroke-linejoin="round"/><path d="M9.700 3.500l-3 3M11.500 5.200l-1.500 1.500M13.200 6.800l-1.500 1.500M15 8.400l-3 3M16.700 10l-1.500 1.500M18.400 11.600l-1.500 1.500M20 13.200l-2.500 2.500" stroke="#063d42" stroke-width=".9"/></svg>
<svg class="ic" style="left:402px;top:91px" viewBox="0 0 24 24"><path d="M3 7.500l7.500-4.500 5.500 2v5l5.500 2v7.500l-8 4.500-10.500-4z" fill="#f2e02a" stroke="#6e6500" stroke-width="1" stroke-linejoin="round"/><path d="M3 7.500l5.500 2 7.500-4.500-5.500-2z" fill="#fbf27a" stroke="#6e6500" stroke-width=".7" stroke-linejoin="round"/><path d="M8.500 9.500v5.500l5 2 8-5-5.500-2-7.500 4.500" fill="none" stroke="#6e6500" stroke-width=".7"/><path d="M8.500 15l5 2 8-5-5.500-2z" fill="#fbf27a" stroke="#6e6500" stroke-width=".7" stroke-linejoin="round"/><path d="M13.500 17v7l8-4.500v-7.500z" fill="#d9c610" stroke="#6e6500" stroke-width=".7" stroke-linejoin="round"/><path d="M3 14.500l10.500 4M16 5v5" stroke="#6e6500" stroke-width=".7"/></svg>
<svg class="ic" style="left:433px;top:91px" viewBox="0 0 24 24"><path d="M2.500 3.500c0-.8.500-1.300 1.300-1.300h6l1.700 2.500h8c.8 0 1.300.5 1.300 1.300v13h-18.300z" fill="#707070"/><path d="M3.500 5.500h17v3h-17z" fill="#8a8a8a"/><rect x="3.200" y="7.300" width="20.300" height="13.700" rx="1" fill="#6e9fdc" stroke="#4a7fc2" stroke-width=".8"/><path d="M3.500 7.800h19.700v5c-7 2-13 2-19.700 0z" fill="#86b1e6" opacity=".6"/></svg>
<div class="dd" style="left:105.500px;top:101px"></div>
<svg class="ic" style="left:14px;top:125px" viewBox="0 0 24 24"><path d="M1.600 14.800l7.300-3.300h12.800v7.200l-8.200 4-11.900-.7z" fill="#5a93d8" stroke="#0e2a52" stroke-width="1.100" stroke-linejoin="round"/><path d="M1.600 14.800l11.900 .6v7.300l-11.900-.7z" fill="url(#gBlueV)" stroke="#0e2a52" stroke-width=".8" stroke-linejoin="round"/><path d="M13.500 15.400l8.200-3.900v7.200l-8.200 4z" fill="#2c62ae" stroke="#0e2a52" stroke-width=".8" stroke-linejoin="round"/><path d="M11.300 .9l6.400 7.300h-3.900v5.200h-5.300v-5.900h-3.900z" fill="url(#gBlueV)" stroke="#0e2a52" stroke-width="1" stroke-linejoin="round"/></svg>
<svg class="ic" style="left:45px;top:125px" viewBox="0 0 24 24"><defs><linearGradient id="rvG" x1="0" y1="0" x2="0" y2="1"><stop offset="0" stop-color="#86b4ea"/><stop offset="1" stop-color="#3368b4"/></linearGradient></defs><path d="M12.10 0.75A11.2 11.2 0 0 0 3.98 19.44L8.88 15.03A4.6 4.6 0 0 1 12.22 7.35Z" fill="url(#rvG)" stroke="#1f4e8c" stroke-width=".9" stroke-linejoin="round"/><path d="M4.81 20.27A11.2 11.2 0 0 0 19.79 20.27L15.38 15.37A4.6 4.6 0 0 1 9.22 15.37Z" fill="#6fa3e0" stroke="#1f4e8c" stroke-width=".9" stroke-linejoin="round"/><path d="M20.57 18.89A10.8 10.8 0 0 0 18.95 3.44L22.7 4.1 16 2.4 16 8.6 16.86 6.12A7.4 7.4 0 0 1 17.97 16.71Z" fill="#5f97da" stroke="#1f4e8c" stroke-width=".8" stroke-linejoin="round"/><circle cx="12.3" cy="11.95" r="1.700" fill="#4a86cf" stroke="#1f4e8c" stroke-width=".7"/></svg>
<svg class="ic" style="left:76px;top:125px" viewBox="0 0 24 24"><defs><linearGradient id="miA" x1="0" y1="0" x2="0" y2="1"><stop offset="0" stop-color="#3a72b8"/><stop offset="1" stop-color="#1d4a8a"/></linearGradient><linearGradient id="miB" x1="0" y1="0" x2="0" y2="1"><stop offset="0" stop-color="#7fb0ea"/><stop offset="1" stop-color="#3a72b8"/></linearGradient></defs><path d="M1 7l7.500-3.800v13.300l-7.500 4.200z" fill="url(#miA)" stroke="#12305c" stroke-width=".9" stroke-linejoin="round"/><path d="M15.300 3.200l7.500 3.800v13.700l-7.500-4.200z" fill="url(#miB)" stroke="#12305c" stroke-width=".9" stroke-linejoin="round"/><g stroke-linecap="round"><path d="M11.900 2.300v1.900M11.900 10.600v2.700M11.900 19.700v1.700" stroke="#6a0000" stroke-width="2.900"/><path d="M11.900 2.300v1.900M11.900 10.600v2.700M11.900 19.700v1.700" stroke="#d40a0a" stroke-width="1.900"/></g></svg>
<svg class="ic" style="left:107px;top:125px" viewBox="0 0 24 24"><path d="M7.700 3.200l5.300-1.800 10 4-6 .9z" fill="#4f88d0" stroke="#2c5c9e" stroke-width=".6" stroke-linejoin="round"/><path d="M.9 13.800l10.600 3.700 .3 4.700-10.900-3.400z" fill="#4a82c8" stroke="#2c5c9e" stroke-width=".6" stroke-linejoin="round"/><path d="M.9 16.300l10.700 3.500" stroke="#2f66b3" stroke-width="1"/><path d="M.9 13.800c.2-5.500 2.500-9 6.800-10.600l9.300 3.100c-3.800 1.500-5.600 5.200-5.500 11.200z" fill="url(#gBlueV)" stroke="#0b1c36" stroke-width="1" stroke-linejoin="round"/></svg>
<svg class="ic" style="left:138px;top:125px" viewBox="0 0 24 24"><path d="M8.500 3.200l4.300-1.800 10.300 4-4.100 1.600z" fill="#4f88d0" stroke="#2c5c9e" stroke-width=".6" stroke-linejoin="round"/><path d="M1 13.500l10.600 3.700v5l-10.600-3.700z" fill="#4a82c8" stroke="#2c5c9e" stroke-width=".6" stroke-linejoin="round"/><path d="M1 16l10.600 3.700" stroke="#2f66b3" stroke-width="1"/><path d="M1 13.500l7.500-10.300 10.500 3.800-7.400 10.200z" fill="url(#gBlue)" stroke="#0b1c36" stroke-width="1" stroke-linejoin="round"/></svg>
<svg class="ic" style="left:169px;top:125px" viewBox="0 0 24 24"><path d="M1.800 7l20.200-5.300v15.200l-20.200 5z" fill="url(#gBlue)" stroke="#0b1c36" stroke-width=".9"/><path d="M1.800 6v16.800" stroke="#d40a0a" stroke-width="2.200"/><path d="M22 .9v16.600" stroke="#d40a0a" stroke-width="2.200"/></svg>
<svg class="ic" style="left:200px;top:125px" viewBox="0 0 24 24"><path d="M4.200 10.300l4.400-5.200 10.200 2.300-8.800 4.800z" fill="#75a7e3" stroke="#0e2a52" stroke-width=".8" stroke-linejoin="round"/><path d="M10 12.200l9.800-5.300 .6 13.900-10.400-1.400z" fill="url(#gBlueV)" stroke="#0e2a52" stroke-width=".8" stroke-linejoin="round"/><path d="M10 12.200l9.800-5.300 .6 13.900-10.400-1.400z" fill="#1d4a8a" opacity=".45"/><path d="M8.400 3.600l13.100 2.500-.4 15.400" fill="none" stroke="#8a0808" stroke-width="2.400" stroke-linejoin="miter"/><path d="M8.400 3.600l13.100 2.500-.4 15.400" fill="none" stroke="#e21818" stroke-width="1.500" stroke-linejoin="miter"/><path d="M3.200 11.900l5.200 1.200v5.300l-5.200-1.300z" fill="#2f66b3" stroke="#8a0808" stroke-width="2.400" stroke-linejoin="miter"/><path d="M3.200 11.900l5.200 1.200v5.300l-5.200-1.300z" fill="#2f66b3" stroke="#e21818" stroke-width="1.500" stroke-linejoin="miter"/></svg>
<svg class="ic" style="left:231px;top:125px" viewBox="0 0 24 24"><path d="M4 12c2-1.800 3.300-4.500 3.900-7.900l9.300 1.800c-.8 4-3.500 7-7.800 8.500z" fill="#75a7e3" stroke="#0e2a52" stroke-width=".8" stroke-linejoin="round"/><path d="M9.400 14.400c4.300-1.500 7-4.500 7.800-8.500l5 9c-2.500 3.800-7 6.300-13.300 7z" fill="#2c60aa" stroke="#0e2a52" stroke-width=".8" stroke-linejoin="round"/><path d="M11.500 17l3-1.300M17.500 11.500l1.300-1.500" stroke="#e2344a" stroke-width="1.200"/><path d="M7.500 2.200l10.600 2.300 4.500 10.400" fill="none" stroke="#8a0808" stroke-width="2.400"/><path d="M7.500 2.200l10.600 2.300 4.500 10.400" fill="none" stroke="#e21818" stroke-width="1.500"/><path d="M2.100 13.700l5.400 1.900v5.500l-5.400-2z" fill="#24508f" stroke="#8a0808" stroke-width="2.400" stroke-linejoin="miter"/><path d="M2.100 13.700l5.400 1.900v5.500l-5.400-2z" fill="#24508f" stroke="#e21818" stroke-width="1.500" stroke-linejoin="miter"/><path d="M2.500 17.600h3.200" stroke="#8a0000" stroke-width="2"/><ellipse cx="21.600" cy="2.800" rx="1.300" ry="1.700" transform="rotate(20 21.600 2.800)" fill="#5a0000" stroke="#e21818" stroke-width="1.100"/></svg>
<svg class="ic" style="left:262px;top:125px" viewBox="0 0 24 24"><path d="M1.500 21l6.500-3.500h12l-6.500 3.500z" fill="#bdbdbd" stroke="#a6a6a6" stroke-width=".7"/><path d="M1.500 13.500l6.500-3.500h12.500l-6.500 3.500z" fill="#bfbfbf" stroke="#a6a6a6" stroke-width=".7"/><path d="M11 1l6.500 6.500h-3.500v5.500h-6v-5.500h-3.500z" fill="url(#gGrayV)" stroke="#a0a0a0" stroke-width=".8" stroke-linejoin="round"/></svg>
<svg class="ic" style="left:305px;top:125px" viewBox="0 0 24 24"><path d="M1.500 8l11-3 10 2.500v8.500l-10 3.500-11-3z" fill="#b4b4b4" stroke="#a0a0a0" stroke-width=".8" stroke-linejoin="round"/><path d="M1.500 8l11 2.500 10-3-10-2.500z" fill="#c8c8c8"/><path d="M12.500 10.500l10-3v8.500l-10 3.500z" fill="#a6a6a6"/><path d="M12.500 10.500v9M1.500 8l11 2.500 10-3" stroke="#a0a0a0" stroke-width=".7" fill="none"/></svg>
<svg class="ic" style="left:348px;top:125px" viewBox="0 0 24 24"><path d="M3.800 3.500h-2.500v17.500h2.500M20.500 3.500h2.500v17.500h-2.500" fill="none" stroke="#1a1a1a" stroke-width="1"/><path d="M3.500 7.500l9.500-2.500 8 2.500v10.500l-8 3.500-9.500-3z" fill="#3d74c4" stroke="#1f4e8c" stroke-width=".9" stroke-linejoin="round"/><path d="M3.500 7.500l9.500 2.500 8-2.500-8-2.500z" fill="#7fb0ea" stroke="#1f4e8c" stroke-width=".7" stroke-linejoin="round"/><path d="M13 10v11.500l8-3.500v-10.500z" fill="#2a58a0" stroke="#1f4e8c" stroke-width=".7" stroke-linejoin="round"/></svg>
<svg class="ic" style="left:390px;top:125px" viewBox="0 0 24 24"><circle cx="16.7" cy="9.4" r="7.1" fill="#5e95d8" stroke="#1f4e8c" stroke-width=".8"/><circle cx="9.2" cy="14.8" r="7.1" fill="url(#gBlueR)" stroke="#1f4e8c" stroke-width=".8"/></svg>
<svg class="ic" style="left:421px;top:125px" viewBox="0 0 24 24"><circle cx="8.8" cy="15.2" r="7.1" fill="url(#gGrayR)" stroke="#a8a8a8" stroke-width=".8"/><circle cx="16.3" cy="9.4" r="7.1" fill="url(#gWhiteR)" stroke="#c6c6c6" stroke-width=".8"/></svg>
<svg class="ic" style="left:452px;top:125px" viewBox="0 0 24 24"><circle cx="16.3" cy="9.4" r="7.1" fill="url(#gGrayR)" stroke="#a6a6a6" stroke-width=".8"/><circle cx="8.8" cy="15.2" r="7.1" fill="url(#gGrayR)" stroke="#a6a6a6" stroke-width=".8"/><path d="M10 8.500l6 7" stroke="#c0c0c0" stroke-width=".8"/></svg>
<svg class="ic" style="left:483px;top:125px" viewBox="0 0 24 24"><circle cx="8.800" cy="15" r="7.100" fill="url(#gWhiteR)" stroke="#b8b8b8" stroke-width=".8"/><circle cx="16.400" cy="9.400" r="7.100" fill="#f6f6f6" fill-opacity=".6" stroke="#b0b0b0" stroke-width=".8"/><path d="M9.500 8a7.100 7.100 0 0 1 6.200 8.800a7.100 7.100 0 0 1 -6.200 -8.800z" fill="#a9a9a9" stroke="#909090" stroke-width=".6"/></svg>
<svg class="ic" style="left:514px;top:125px" viewBox="0 0 24 24"><rect x="2.200" y="1" width="9.400" height="22" fill="url(#gBlueV)"/><rect x="11" y="7.400" width="12.900" height="9.400" fill="url(#gBlueV)"/><path d="M3 1v22M10.900 1v7.200h13M10.900 23v-6.900h13" fill="none" stroke="#d40a0a" stroke-width="1.700"/></svg>
<svg class="ic" style="left:558px;top:125px" viewBox="0 0 24 24"><circle cx="7.300" cy="16" r="6.600" fill="url(#gBlueR)" stroke="#1f4e8c" stroke-width=".8"/><circle cx="16.700" cy="8" r="6.600" fill="#5e95d8" stroke="#1f4e8c" stroke-width=".8"/><path d="M10.200 10a6.600 6.600 0 0 1 3.700 6.500" fill="none" stroke="#fff" stroke-width="1.600"/><path d="M13.700 13.800a6.600 6.600 0 0 1 -3.500-6.300" fill="none" stroke="#fff" stroke-width="1.600"/></svg>
<svg class="ic" style="left:601px;top:125px" viewBox="0 0 24 24"><path d="M8.500 9.500h7l5 12c-5 2-12 2-17 0z" fill="#b2b2b2" stroke="#a2a2a2" stroke-width=".7"/><circle cx="12" cy="6" r="4.800" fill="url(#gWhiteR)" stroke="#c0c0c0" stroke-width=".8"/><path d="M15 9l3.500 3.500" stroke="#b8b8b8" stroke-width="2"/></svg>
<svg class="ic" style="left:632px;top:125px" viewBox="0 0 24 24"><path d="M1.500 5.500l11-3 10 2.500v13l-10 3.500-11-3z" fill="#c2c2c2" stroke="#aaa" stroke-width=".8" stroke-linejoin="round"/><path d="M1.500 5.500l11 2.500 10-3-10-2.500z" fill="#d6d6d6"/><path d="M12.500 8l10-3v13l-10 3.500z" fill="#b4b4b4"/><path d="M2.500 12l8-5.500v3.500c6 0 10 3 10 7 0 3-2 5-5 6.500l-1.500-2c2-1 3-2.500 3-4.500 0-2.500-2.500-4-6.500-4v4z" fill="#9a9a9a" stroke="#8a8a8a" stroke-width=".6" stroke-linejoin="round"/></svg>
<svg class="ic" style="left:663px;top:125px" viewBox="0 0 24 24"><path d="M19.600 5.300l2.100 .8v10l-2.100 .8z" fill="#8e8e8e" stroke="#808080" stroke-width=".6"/><path d="M2.200 1.600l17.400 3.700v17.400l-17.400-2.400z" fill="#b6b6b6" stroke="#8c8c8c" stroke-width=".8" stroke-linejoin="round"/><path d="M5.500 5.700l11.200 2.100v11.600l-11.200-1.600z" fill="#a0a0a0" stroke="#868686" stroke-width=".8" stroke-linejoin="round"/><path d="M7.600 7.800l7.100 1.200v8.300l-7.100-1.200z" fill="#b9b9b9" stroke="#8a8a8a" stroke-width=".7" stroke-linejoin="round"/><path d="M9.500 9.500l3.600 .6v6.200l-3.600-.6z" fill="#9a9a9a"/><path d="M10.500 16.200l3-1.500v2z" fill="#ededed"/></svg>
<svg class="ic" style="left:694px;top:125px" viewBox="0 0 24 24"><path d="M6.100 4.100l5.500-3.400 7.400 1.400v17l-3.400 3.200-9.500-1.500z" fill="#ababab" stroke="#7e7e7e" stroke-width=".8" stroke-linejoin="round"/><path d="M6.100 4.100l9.500 1.300 3.400-3.300-7.400-1.400z" fill="#c2c2c2" stroke="#7e7e7e" stroke-width=".6" stroke-linejoin="round"/><path d="M15.600 5.400l3.400-3.300v17l-3.400 3.200z" fill="#8e8e8e" stroke="#7e7e7e" stroke-width=".6" stroke-linejoin="round"/><path d="M1.100 10.700l6.600-3.700h15.400l-6.200 3.700z" fill="#a8a8a8" stroke="#8a8a8a" stroke-width=".7" stroke-linejoin="round"/><path d="M1.100 17.300l6.600-3.700h15.400l-6.200 3.700z" fill="#a8a8a8" stroke="#8a8a8a" stroke-width=".7" stroke-linejoin="round"/><path d="M6.100 10.900h9.500v2.500h-9.500zM6.100 17.500h9.500v3.800l-9.500-1.400z" fill="#ababab"/><path d="M15.600 10.900l1.300-.2 2.100-1.300v3l-3.400 1z M15.600 17.500l1.300-.2 2.100-1.300v3l-3.400 3.300z" fill="#8e8e8e"/><path d="M6.100 11v2.400M15.600 11v2.400M6.100 17.500v3.300M15.600 17.500v4" stroke="#7e7e7e" stroke-width=".7"/></svg>
<svg class="ic" style="left:736px;top:125px" viewBox="0 0 24 24"><path d="M.800 5l14-3.500 8.500 3v14.500l-8.500 4-14-3.500z" fill="#ecd922" stroke="#6e6500" stroke-width=".9" stroke-linejoin="round"/><path d="M.800 5l14 3 8.500-3.500-8.500-3z" fill="#fbf27a" stroke="#6e6500" stroke-width=".7" stroke-linejoin="round"/><path d="M14.800 8v15l8.500-4v-14.500z" fill="url(#gYel)" stroke="#6e6500" stroke-width=".7" stroke-linejoin="round"/><path d="M14.800 8v15l8.500-4v-14.500z" fill="#c9b200" opacity=".45"/></svg>
<svg class="ic" style="left:767px;top:125px" viewBox="0 0 24 24"><path d="M2.300 5.500v13.500a9.500 4.300 0 0 0 19 0V5.500z" fill="url(#gYel)" stroke="#6e6500" stroke-width=".9"/><ellipse cx="11.800" cy="5.500" rx="9.500" ry="4.300" fill="#f8ea4a" stroke="#6e6500" stroke-width=".9"/></svg>
<svg class="ic" style="left:798px;top:125px" viewBox="0 0 24 24"><circle cx="12.700" cy="11.800" r="10.800" fill="url(#gYelR)" stroke="#6e6500" stroke-width=".9"/></svg>
<svg class="ic" style="left:829px;top:125px" viewBox="0 0 24 24"><path d="M13 1.200l-8 18.800a8 2.800 0 0 0 16 0z" fill="url(#gYel)" stroke="#6e6500" stroke-width=".9" stroke-linejoin="round"/></svg>
<svg class="ic" style="left:860px;top:125px" viewBox="0 0 24 24"><ellipse cx="12.800" cy="13" rx="10.800" ry="8.600" fill="url(#gYelR)" stroke="#6e6500" stroke-width=".9"/><ellipse cx="12.800" cy="12.600" rx="5.600" ry="3" fill="#f0f0f0" stroke="#6e6500" stroke-width=".9"/></svg>
<svg class="ic" style="left:891px;top:125px" viewBox="0 0 24 24"><path d="M6.300 1l-3.800 9a3.800 1.300 0 0 0 7.600 0z" fill="url(#gYel)" stroke="#6e6500" stroke-width=".7"/><path d="M10.800 5.500h12" stroke="#7d7d7d" stroke-width="2.400" stroke-linecap="round"/><path d="M10.800 5.500h12" stroke="#c9cdc9" stroke-width="1.200" stroke-linecap="round"/><path d="M3.500 11.500l8-2.500 9.500 2v9.500l-9 2.500-8.500-2z" fill="#ecd922" stroke="#6e6500" stroke-width=".8" stroke-linejoin="round"/><path d="M3.500 11.500l9 1.500 8.500-2-9.500-2z" fill="#f8ec5a"/><path d="M12.500 13v10" stroke="#6e6500" stroke-width=".5"/><circle cx="6.800" cy="17.500" r="4.800" fill="#e9d31f" stroke="#6f6f6f" stroke-width="1.100"/><circle cx="6.800" cy="17.500" r="2.800" fill="none" stroke="#8a8a80" stroke-width=".9"/><circle cx="6.800" cy="17.500" r="1.200" fill="none" stroke="#8a8a80" stroke-width=".8"/><circle cx="18" cy="17.500" r="4.800" fill="#e2c914" stroke="#6f6f6f" stroke-width="1.100"/><circle cx="18" cy="17.500" r="5.900" fill="none" stroke="#a8a8a8" stroke-width=".9"/><circle cx="6.800" cy="17.500" r="5.900" fill="none" stroke="#a8a8a8" stroke-width=".9"/></svg>
<svg class="ic" style="left:922px;top:125px" viewBox="0 0 24 24"><path d="M1.200 14.200l6-1.700 7.300 1.700v6.500l-6 2.500-7.300-.9z" fill="#ecd922" stroke="#6e6500" stroke-width=".9" stroke-linejoin="round"/><path d="M1.200 14.200l7.300 1.700 6-1.700-7.300-1.700z" fill="#f8ec5a" stroke="#6e6500" stroke-width=".6" stroke-linejoin="round"/><path d="M8.500 15.900v7.300l6-2.500v-6.500z" fill="#d4bf10" stroke="#6e6500" stroke-width=".6" stroke-linejoin="round"/><path d="M14.300 1.100h10.500" stroke="#7d7d7d" stroke-width="2"/><path d="M14.800 1.100h9.500" stroke="#b9bdb9" stroke-width=".8"/><path d="M19.300 2.300h2.200v3h2.200l-3.300 3.400-3.300-3.400h2.200z" fill="#e21a1a" stroke="#8a0a0a" stroke-width=".6" stroke-linejoin="round"/><rect x="18.200" y="10.100" width="5.800" height="5.600" fill="#fff" stroke="#7c7c7c" stroke-width="1.500"/><path d="M4.200 5.100l2.800 2.800-2.800 2.800-2.800-2.800z" fill="#dfe3e0" stroke="#808080" stroke-width=".9"/><path d="M7.200 5l1.300 2 1.700-1 .3 1.800 3-3.600-.7-2.200-4.500 .6 1.500 1.200z" fill="#e21a1a" stroke="#8a0a0a" stroke-width=".6" stroke-linejoin="round" transform="translate(-.3,.3)"/><path d="M21 17.500l-1.400-1.600-1.400 1.400-.8-1.400-2 4.200 1 1.600 4.200-1.400-1.500-.8z" fill="#e21a1a" stroke="#8a0a0a" stroke-width=".6" stroke-linejoin="round"/></svg>
<svg class="ic" style="left:965px;top:125px" viewBox="0 0 24 24"><use href="#tape"/></svg>
<svg class="ic" style="left:996px;top:125px" viewBox="0 0 24 24"><use href="#tape"/><path d="M8 4c4-3.500 10-2.500 12.500 3l1.500-1-.5 5-4.500-2 1.500-1c-2-3.500-6-4-9-2z" fill="#3f78c0" stroke="#1f4e8c" stroke-width=".6"/><path d="M2 3.500l5.500 18 15-10.500" fill="none" stroke="#8a0a0a" stroke-width="2.600"/><path d="M2 3.500l5.500 18 15-10.500" fill="none" stroke="#e21a1a" stroke-width="1.600"/></svg>
<svg class="ic" style="left:1033px;top:125px" viewBox="0 0 24 24"><use href="#tape"/><path d="M2.500 12.500l10 10M12.500 12.500l-10 10" stroke="#8a0a0a" stroke-width="3.200"/><path d="M2.500 12.500l10 10M12.500 12.500l-10 10" stroke="#e21a1a" stroke-width="2"/></svg>
<svg class="ic" style="left:1064px;top:125px" viewBox="0 0 24 24"><use href="#tape"/><path d="M2 22V3.500h19.500V22" fill="none" stroke="#3a8a0a" stroke-width="3"/><path d="M2 22V3.500h19.500V22" fill="none" stroke="#7be02a" stroke-width="1.800"/><path d="M2.500 11.500l8.500-9.500 11.500 10-10.500 10.500" fill="none" stroke="#8a0a0a" stroke-width="2.800" stroke-linejoin="miter"/><path d="M2.500 11.500l8.500-9.500 11.500 10-10.500 10.500" fill="none" stroke="#e21a1a" stroke-width="1.700" stroke-linejoin="miter"/></svg>
<svg class="ic" style="left:1095px;top:125px" viewBox="0 0 24 24"><use href="#tape"/><path d="M2.500 11.500l8.500-9.500 11.500 10-10.500 10.500" fill="none" stroke="#8a0a0a" stroke-width="2.800" stroke-linejoin="miter"/><path d="M2.500 11.500l8.500-9.500 11.500 10-10.500 10.500" fill="none" stroke="#e21a1a" stroke-width="1.700" stroke-linejoin="miter"/></svg>
<svg class="ic" style="left:1126px;top:125px" viewBox="0 0 24 24"><use href="#tape"/><path d="M2 22V3.500h19.500V22" fill="none" stroke="#3a8a0a" stroke-width="3"/><path d="M2 22V3.500h19.500V22" fill="none" stroke="#7be02a" stroke-width="1.800"/></svg>
<div class="dd" style="left:291.500px;top:135px;border-top-color:#808080"></div>
<div class="dd" style="left:377.5px;top:135px"></div>
<div class="dd" style="left:544.5px;top:135px"></div>
<div class="dd" style="left:588px;top:135px"></div>
<div class="abs" style="left:1px;top:155px;width:268px;height:19px;background:#dcdcdc;border:1px solid #bebebe"></div>
<div class="t tah" style="top:159.72px;left:3.00px;font-size:11.2px;letter-spacing:-0.629px;">Combo View</div>
<svg class="abs" style="left:240px;top:160px" width="9" height="10" viewBox="0 0 9 10"><rect x="2.7" y=".6" width="4.800" height="4.600" fill="none" stroke="#000" stroke-width="1"/><rect x="2.200" y=".1" width="5.800" height="2" fill="#000"/><rect x=".5" y="3.800" width="4.800" height="4.600" fill="#e8e8e8" stroke="#000" stroke-width="1"/><rect x="0" y="3.300" width="5.800" height="2" fill="#000"/></svg>
<svg class="abs" style="left:255.5px;top:160.7px" width="9" height="8" viewBox="0 0 9 8"><path d="M.8 .6l7.200 6.600M8 .6l-7.200 6.600" stroke="#000" stroke-width="1.700" fill="none"/></svg>
<div class="abs" style="left:1px;top:196px;width:268px;height:1px;background:#d9d9d9"></div>
<div class="abs" style="left:2px;top:176px;width:53px;height:21px;background:#fff;border:1px solid #d9d9d9;border-bottom:none"></div>
<div class="abs" style="left:55px;top:178px;width:46px;height:18px;background:#f0f0f0;border:1px solid #d9d9d9;border-bottom:none;border-left:none"></div>
<div class="t ui" style="top:181.09px;left:12.00px;font-size:12.3px;letter-spacing:-1.000px;">Model</div>
<div class="t ui" style="top:181.89px;left:64.50px;font-size:12.3px;letter-spacing:-1.088px;">Tasks</div>
<div class="abs" style="left:3px;top:198px;width:262px;height:258px;background:#fff;border:1px solid #828790"></div>
<div class="abs" style="left:181px;top:199px;width:1px;height:22px;background:#e5e5e5"></div>
<div class="t ui" style="top:205.49px;left:8.00px;font-size:12.3px;letter-spacing:-0.082px;">Labels &amp; Attributes</div>
<div class="t ui" style="top:225.49px;left:7.50px;font-size:12.3px;letter-spacing:-0.015px;">Application</div>
<svg class="abs" style="left:9px;top:244px" width="10" height="8" viewBox="0 0 10 8" fill="none" stroke="#404040" stroke-width="1.500"><path d="M1 1.500l4 4 4-4"/></svg>
<svg class="abs" style="left:28px;top:240px" width="15" height="16" viewBox="0 0 15 16">
<rect x=".5" y=".5" width="13" height="15" rx="1.5" fill="#f4f4f4" stroke="#9a9a9a"/>
<path d="M3 7l5-1.5 3 1.5v5l-4 2-4-2z" fill="#3d6fb0" stroke="#1f3f6f" stroke-width=".6"/><path d="M3 7l4 1.6 4-1.600M7 8.600v5.400" stroke="#1f3f6f" stroke-width=".6" fill="none"/>
<circle cx="9.500" cy="4" r="2.800" fill="#e01b24"/></svg>
<div class="t ui" style="top:243.49px;left:49.00px;font-size:12.3px;font-weight:bold;letter-spacing:-0.235px;">Unnamed4</div>
<svg class="abs" style="left:47px;top:258px" width="17" height="16" viewBox="0 0 17 16">
<path d="M1.500 3.500l9-1.700 5 1.700v8.500l-5.500 2.500-8.500-2z" fill="#3d6fb0" stroke="#1b3a66" stroke-width=".8"/>
<path d="M1.500 3.500l8.500 1.800 5.500-1.800M10 5.300v9.200" stroke="#1b3a66" stroke-width=".8" fill="none"/><path d="M1.500 3.500l8.500 1.800v9.200l-8.500-2z" fill="#2c5a9a"/><path d="M1.500 3.500l9-1.700 5 1.700-5.500 1.800z" fill="#6b9bd8"/></svg>
<div class="t ui" style="top:261.29px;left:69.00px;font-size:12.3px;letter-spacing:-0.389px;">Admi0D90DBA1b5cp</div>
<div class="abs" style="left:3px;top:461px;width:260px;height:273px;background:#f0f0f0;border:1px solid #dadada"></div>
<div class="abs" style="left:5px;top:463px;width:257px;height:268px;background:#fff;border:1px solid #828790"></div>
<div class="abs" style="left:105px;top:464px;width:1px;height:22px;background:#e5e5e5"></div>
<div class="abs" style="left:260px;top:464px;width:1px;height:22px;background:#e5e5e5"></div>
<div class="t ui" style="top:470.49px;left:10.00px;font-size:12.3px;letter-spacing:-0.185px;">Property</div>
<div class="t ui" style="top:470.49px;left:110.00px;font-size:12.3px;letter-spacing:-0.309px;">Value</div>
<div class="abs" style="left:1px;top:733px;width:268px;height:17px;background:#f8f8f8"></div>
<svg class="abs" style="left:0px;top:730px" width="110" height="22" viewBox="0 0 110 22" fill="#fdfdfd" stroke="#1a1a1a" stroke-width="1">
<path d="M3.400 4.200c1.800 5 2.800 8 4 9.800 1 1.400 2 1.800 3.500 1.800h27.500c1.800 0 2.800-.6 3.600-2.200 1.500-3 3-6.500 5.500-9.400"/><path d="M48.400 3.200c2.800 4 3.800 8.500 5.800 11.800 1 1.600 2 2.300 3.800 2.300h27c1.800 0 3-.6 3.800-2.200 1.800-3.500 3.600-7.500 6.600-11.900"/></svg>
<div class="t tah" style="top:735.42px;left:14.50px;font-size:11.2px;letter-spacing:-0.518px;">View</div>
<div class="t tah" style="top:736.42px;left:60.00px;font-size:11.2px;letter-spacing:-0.164px;">Data</div>
<svg class="abs" style="left:273px;top:154px" width="1107" height="574.500" viewBox="273 154 1107 574.500">
<defs><linearGradient id="bg" x1="0" y1="0" x2="0" y2="1"><stop offset="0" stop-color="#33336a"/><stop offset="1" stop-color="#9797b0"/></linearGradient><linearGradient id="pin" x1="0" y1="0" x2="1" y2="0"><stop offset="0" stop-color="#8c8c8c"/><stop offset=".45" stop-color="#e6e6e6"/><stop offset="1" stop-color="#909090"/></linearGradient><radialGradient id="dome" cx=".4" cy=".35" r=".7"><stop offset="0" stop-color="#f0f0f0"/><stop offset=".5" stop-color="#bdbdbd"/><stop offset="1" stop-color="#6e6e6e"/></radialGradient><linearGradient id="hole" x1="0" y1="0" x2="1" y2="0"><stop offset="0" stop-color="#e4e4e4"/><stop offset="1" stop-color="#9a9a9a"/></linearGradient></defs>
<rect x="273" y="154" width="1107" height="575" fill="url(#bg)"/>
<polygon points="609.4,546.0 640.5,528.3 640.5,563.7" fill="#818181" stroke="#0a0a0a" stroke-width="1.3" stroke-linejoin="round" />
<polygon points="826.5,669.4 857.9,687.8 1043.7,580.5 1012.5,563.0" fill="#818181" stroke="#0a0a0a" stroke-width="1.3" stroke-linejoin="round" />
<polygon points="609.4,546.0 857.9,687.8 857.9,717.0 609.4,573.6" fill="#818181" stroke="#0a0a0a" stroke-width="1.3" stroke-linejoin="round" />
<polygon points="857.9,687.8 1043.7,580.5 1043.7,609.0 857.9,717.0" fill="#818181" stroke="#0a0a0a" stroke-width="1.3" stroke-linejoin="round" />
<polygon points="640.5,318.4 826.5,425.2 826.5,669.6 640.5,563.7" fill="#818181" stroke="#0a0a0a" stroke-width="1.3" stroke-linejoin="round" />
<polygon points="826.5,425.2 857.9,443.4 1012.5,354.1 1012.5,563.0 826.5,669.6" fill="#818181" stroke="#0a0a0a" stroke-width="1.3" stroke-linejoin="round" />
<polygon points="675.1,497.8 792.1,564.8 792.1,650.2 675.1,583.5" fill="#818181" stroke="#0a0a0a" stroke-width="1.3" stroke-linejoin="round" />
<polygon points="677.5,537.9 709.6,518.6 821.0,582.0 789.8,601.0" fill="#818181" stroke="#0a0a0a" stroke-width="1.3" stroke-linejoin="round" />
<polygon points="677.5,537.9 789.8,601.0 790.4,642.1 677.5,580.1" fill="#818181" stroke="#0a0a0a" stroke-width="1.3" stroke-linejoin="round" />
<line x1="677.5" y1="557.2" x2="790.4" y2="620.0" stroke="#0a0a0a" stroke-width="1.3" stroke-linecap="round"/>
<ellipse cx="700" cy="537.4" rx="4.3" ry="3.2" fill="#8e8e8e" stroke="#0a0a0a" stroke-width="1"/>
<path d="M715.600 515V541a10.300 5 0 0 0 20.600 0V527z" fill="url(#pin)"/><path d="M715.600 541a10.300 5 0 0 0 20.600 0" fill="none" stroke="#3a3a3a" stroke-width=".8"/>
<path d="M774.800 548V576a8.200 4 0 0 0 16.400 0V560z" fill="url(#pin)"/><path d="M774.800 576a8.200 4 0 0 0 16.400 0" fill="none" stroke="#3a3a3a" stroke-width=".8"/>
<ellipse cx="788" cy="588.6" rx="3.6" ry="3" fill="#9a9a9a" stroke="#0a0a0a" stroke-width="1"/>
<path d="M780.500 593.500l9 5.500M780.500 596l8 5M780.500 593.500v2.500" stroke="#0a0a0a" stroke-width="1" fill="none"/>
<polygon points="675.1,497.8 792.1,564.8 792.1,520 675.1,450" fill="#818181"/>
<polygon points="792.1,564.8 826,584 826,650 792.1,650.2" fill="#818181"/>
<line x1="640.5" y1="391.3" x2="826.5" y2="497.8" stroke="#0a0a0a" stroke-width="2.4" stroke-linecap="round"/>
<line x1="826.5" y1="497.8" x2="1012.5" y2="392.2" stroke="#0a0a0a" stroke-width="2.4" stroke-linecap="round"/>
<line x1="640.5" y1="478.0" x2="826.5" y2="584.5" stroke="#0a0a0a" stroke-width="1.3" stroke-linecap="round"/>
<line x1="826.5" y1="584.3" x2="1012.5" y2="477.3" stroke="#0a0a0a" stroke-width="1.3" stroke-linecap="round"/>
<line x1="675.1" y1="497.8" x2="675.1" y2="583.5" stroke="#0a0a0a" stroke-width="1.3" stroke-linecap="round"/>
<line x1="792.1" y1="564.8" x2="792.1" y2="650.2" stroke="#0a0a0a" stroke-width="1.3" stroke-linecap="round"/>
<line x1="826.5" y1="425.2" x2="826.5" y2="669.6" stroke="#0a0a0a" stroke-width="1.3" stroke-linecap="round"/>
<ellipse cx="733.3" cy="407.8" rx="5.3" ry="8" transform="rotate(-18 733.3 407.8)" fill="url(#hole)" stroke="#0a0a0a" stroke-width="1.1"/>
<ellipse cx="733.7" cy="488.4" rx="5.3" ry="8" transform="rotate(-18 733.7 488.4)" fill="url(#hole)" stroke="#0a0a0a" stroke-width="1.1"/>
<path d="M848.500 678.500l9.500 5.500 9-5.200M850.500 677.300l7.500 4.300 7-4" stroke="#0a0a0a" stroke-width="1" fill="none"/>
<polygon points="609.4,271.8 857.9,415.7 857.9,443.4 609.4,300.5" fill="#818181" stroke="#0a0a0a" stroke-width="1.3" stroke-linejoin="round" />
<polygon points="857.9,415.7 1043.7,308.1 1043.7,336.9 857.9,443.4" fill="#818181" stroke="#0a0a0a" stroke-width="1.3" stroke-linejoin="round" />
<polygon points="795.2,164.5 609.4,271.8 857.9,415.7 1043.7,308.1" fill="#838383" stroke="#0a0a0a" stroke-width="1.3" stroke-linejoin="round" />
<g transform="translate(786.9,226.8)"><ellipse rx="15.700" ry="9.300" fill="#818181" stroke="#0a0a0a" stroke-width="1.600"/><ellipse cx="0" cy="1" rx="12.600" ry="7.300" fill="#858585" stroke="#0a0a0a" stroke-width="1.300"/><path d="M-7.300 .2l2.300-3.600 8.800-1.300 3.800 4.200-2 4.200-8.600 1.200z" fill="#b6b6b6" stroke="#0a0a0a" stroke-width="1.100" stroke-linejoin="round"/><path d="M-7.300 .2l2.300-3.600 3.300-.5.600 8.300-2.900.5z" fill="#8c8c8c" stroke="#0a0a0a" stroke-width=".9" stroke-linejoin="round"/></g>
<g transform="translate(717.4,267)"><ellipse rx="15.700" ry="9.300" fill="#818181" stroke="#0a0a0a" stroke-width="1.600"/><ellipse cx="0" cy="1" rx="12.600" ry="7.300" fill="#858585" stroke="#0a0a0a" stroke-width="1.300"/><path d="M-7.300 .2l2.300-3.600 8.800-1.300 3.800 4.200-2 4.200-8.600 1.200z" fill="#b6b6b6" stroke="#0a0a0a" stroke-width="1.100" stroke-linejoin="round"/><path d="M-7.300 .2l2.300-3.600 3.300-.5.600 8.300-2.900.5z" fill="#8c8c8c" stroke="#0a0a0a" stroke-width=".9" stroke-linejoin="round"/></g>
<g transform="translate(935.7,312.6)"><ellipse rx="15.700" ry="9.300" fill="#818181" stroke="#0a0a0a" stroke-width="1.600"/><ellipse cx="0" cy="1" rx="12.600" ry="7.300" fill="#858585" stroke="#0a0a0a" stroke-width="1.300"/><path d="M-7.300 .2l2.300-3.600 8.800-1.300 3.800 4.200-2 4.200-8.600 1.200z" fill="#b6b6b6" stroke="#0a0a0a" stroke-width="1.100" stroke-linejoin="round"/><path d="M-7.300 .2l2.300-3.600 3.300-.5.600 8.300-2.900.5z" fill="#8c8c8c" stroke="#0a0a0a" stroke-width=".9" stroke-linejoin="round"/></g>
<g transform="translate(865.8,353.1)"><ellipse rx="15.700" ry="9.300" fill="#818181" stroke="#0a0a0a" stroke-width="1.600"/><ellipse cx="0" cy="1" rx="12.600" ry="7.300" fill="#858585" stroke="#0a0a0a" stroke-width="1.300"/><path d="M-7.300 .2l2.300-3.600 8.800-1.300 3.800 4.200-2 4.200-8.600 1.200z" fill="#b6b6b6" stroke="#0a0a0a" stroke-width="1.100" stroke-linejoin="round"/><path d="M-7.300 .2l2.300-3.600 3.300-.5.600 8.300-2.900.5z" fill="#8c8c8c" stroke="#0a0a0a" stroke-width=".9" stroke-linejoin="round"/></g>
<ellipse cx="802" cy="304.300" rx="38" ry="22.500" fill="#848484" stroke="#0a0a0a" stroke-width="2.800"/>
<ellipse cx="803" cy="303.600" rx="35.300" ry="20.400" fill="none" stroke="#161616" stroke-width="1.100"/>
<ellipse cx="801.800" cy="304.500" rx="14.500" ry="9.200" fill="url(#dome)" stroke="#1a1a1a" stroke-width=".9"/>
<ellipse cx="783" cy="293.400" rx="7.200" ry="4.800" fill="#141414"/><ellipse cx="820.600" cy="315.200" rx="7.200" ry="4.800" fill="#141414"/>
<ellipse cx="783.800" cy="293.600" rx="2" ry="1.200" fill="#a8a8a8"/><ellipse cx="821.400" cy="315.400" rx="2" ry="1.200" fill="#a8a8a8"/>
<rect x="799.500" y="301.500" width="3.500" height="6" fill="none" stroke="#333" stroke-width=".9"/>
<g fill="#e6e9ef"><polygon points="1296.8,162.2 1288,171 1305.800,171"/><polygon points="1297.200,312 1288,303 1306.400,303"/><polygon points="1221.900,236.900 1231.200,228.200 1231.200,245.500"/><polygon points="1372.200,236.900 1363,228.200 1363,245.500"/><path d="M1275.100 169.300l1.500 5.200c-11 3.500-20 9.500-26.500 17.300l2.600 2.300-9.900.6.600-9.600 2.600 2.300c7.500-8.700 17.500-14.700 29.100-18.100z"/><path d="M1318.500 169.300l-1.500 5.200c11 3.500 20 9.500 26.500 17.300l-2.600 2.300 9.900.6-.600-9.600-2.600 2.300c-7.500-8.700-17.500-14.700-29.100-18.100z"/></g>
<polygon points="1296.800,195.600 1318.500,200.700 1336,211.400 1340.400,220.100 1339.600,236.400 1334.200,256 1325.300,266.700 1307.400,281 1298.600,283.600 1289.800,281 1271.900,268.400 1259.400,258.600 1255,236.400 1254.100,222 1257.600,213.300 1273.500,202.500" fill="#f5f6fa" stroke="#f5f6fa" stroke-width="2.500" stroke-linejoin="round" opacity=".97"/>
<g stroke="#e1e5ee" stroke-width="10" stroke-linecap="butt" fill="none"><path d="M1296.800 236.500l-37-21"/><path d="M1296.800 236.500l39-20.500"/><path d="M1296.800 239v41"/></g>
<circle cx="1296.800" cy="236" r="10.500" fill="#f3f4f8" stroke="#e1e5ee" stroke-width="1.500"/>
<g stroke="#c9c9d2" stroke-width="1.300" fill="none"><path d="M1296.800 236v-30"/><path d="M1296.800 236l22 14"/></g><path d="M1296.800 236l-28 17" stroke="#bfe6bf" stroke-width="1.300"/>
<g font-family="Liberation Sans, sans-serif" fill="#5c5c5c"><text font-size="10" transform="matrix(1.02,.48,-.81,.48,1284,206.100)">Top</text><text font-size="13.500" transform="matrix(.78,.56,0,1,1260.500,246)">Front</text><text font-size="13.500" transform="matrix(.8,-.5,0,1,1309.500,263.500)">Right</text></g>
<path d="M1258.800 258.400L1248.900 209.500" stroke="#1515e6" stroke-width="1.300"/><path d="M1258.800 258.400L1296.500 292" stroke="#e0182a" stroke-width="1.400"/><text x="1244.500" y="206.500" font-family="Liberation Sans, sans-serif" font-size="10" fill="#1515e6">Z</text><text x="1299" y="300.500" font-family="Liberation Sans, sans-serif" font-size="10.500" fill="#e0182a">X</text>
<polygon points="1323.600,288.500 1335,284 1346,288.500 1335,293.500" fill="#e9e9e9"/><polygon points="1323.600,288.500 1335,293.500 1335,306 1323.600,301" fill="#c6c6c6"/><polygon points="1346,288.500 1335,293.500 1335,306 1346,301" fill="#dcdcdc"/><polygon points="1350,291 1364.200,291 1357,298.800" fill="#3c3c3c"/>
<g stroke-width="1.600" fill="none"><path d="M1351.500 699V681" stroke="#1c1c8c"/><path d="M1351.500 699l11.400-6.300" stroke="#1c8c1c"/><path d="M1351.500 699l16.500 9.900" stroke="#8c1c1c"/></g><polygon points="1351.500,680 1349.800,687 1353.200,687" fill="#1c1c8c"/><polygon points="1363.500,692.300 1358.500,692.800 1360,695.800" fill="#1c8c1c"/><polygon points="1368.500,709.200 1361.800,707 1363.500,704" fill="#8c1c1c"/><g font-family="Liberation Sans, sans-serif" font-size="9" fill="#000"><text x="1353.500" y="680.900">Z</text><text x="1365.500" y="692.800">Y</text><text x="1370.500" y="709.800">X</text></g>
</svg>
<div class="abs" style="left:1384px;top:155px;width:61px;height:19px;background:#dcdcdc;border:1px solid #bebebe;border-right:none"></div>
<div class="t tah" style="top:159.72px;left:1385.30px;font-size:11.2px;letter-spacing:-0.288px;">kicad ...</div>
<svg class="abs" style="left:1431px;top:160px" width="9" height="10" viewBox="0 0 9 10"><rect x="2.7" y=".6" width="4.800" height="4.600" fill="none" stroke="#000" stroke-width="1"/><rect x="2.200" y=".1" width="5.800" height="2" fill="#000"/><rect x=".5" y="3.800" width="4.800" height="4.600" fill="#e8e8e8" stroke="#000" stroke-width="1"/><rect x="0" y="3.300" width="5.800" height="2" fill="#000"/></svg>
<div class="abs" style="left:1392px;top:181px;width:26px;height:26px;background:#e1e1e1;border:1px solid #adadad"></div>
<svg class="abs" style="left:1397px;top:186px" width="16" height="16" viewBox="0 0 16 16"><polygon points="1.800,8 14.800,1.500 14.800,14.500" fill="#7f7f7f"/></svg>
<div class="abs" style="left:1424px;top:181px;width:26px;height:26px;background:#e1e1e1;border:1px solid #adadad"></div>
<svg class="abs" style="left:1428px;top:185px" width="17" height="20" viewBox="0 0 17 20"><rect x="3" y="4" width="14" height="14" fill="#555"/><rect x="1" y="1" width="14" height="14" fill="#f4f4f0" stroke="#c8c8c8"/></svg>
<div class="abs" style="left:1388.3px;top:220.4px;width:60px;height:20.1px;background:#fff;border:1px solid #7a7a7a"></div>
<div class="t tah" style="top:226.32px;left:1432.00px;font-size:11.2px;letter-spacing:0.272px;">90</div>
<div class="abs" style="left:1388.3px;top:261.4px;width:60px;height:20.1px;background:#fff;border:1px solid #7a7a7a"></div>
<div class="t tah" style="top:267.32px;left:1432.00px;font-size:11.2px;letter-spacing:0.272px;">90</div>
<div class="abs" style="left:1388.3px;top:302.4px;width:60px;height:20.1px;background:#fff;border:1px solid #7a7a7a"></div>
<div class="t tah" style="top:308.32px;left:1432.00px;font-size:11.2px;letter-spacing:0.272px;">90</div>
<div class="abs" style="left:1388.3px;top:340.4px;width:60px;height:20.1px;background:#fff;border:1px solid #7a7a7a"></div>
<div class="t tah" style="top:346.32px;left:1421.00px;font-size:11.2px;letter-spacing:0.501px;">0.10</div>
<div class="abs" style="left:1388.3px;top:381.4px;width:60px;height:20.1px;background:#fff;border:1px solid #7a7a7a"></div>
<div class="t tah" style="top:387.32px;left:1421.00px;font-size:11.2px;letter-spacing:0.501px;">0.10</div>
<div class="abs" style="left:1388.3px;top:422.4px;width:60px;height:20.1px;background:#fff;border:1px solid #7a7a7a"></div>
<div class="t tah" style="top:428.32px;left:1421.00px;font-size:11.2px;letter-spacing:0.501px;">0.10</div>
<div class="abs" style="left:1389px;top:457px;width:60px;height:35px;background:#e1e1e1;border:1px solid #adadad"></div>
<div class="abs" style="left:1389px;top:496px;width:60px;height:34px;background:#e1e1e1;border:1px solid #adadad"></div>
<div class="abs" style="left:1389px;top:534px;width:60px;height:35px;background:#e1e1e1;border:1px solid #adadad"></div>
<div class="abs" style="left:1389px;top:573px;width:60px;height:34px;background:#e1e1e1;border:1px solid #adadad"></div>
<div class="abs" style="left:1389px;top:611px;width:60px;height:34px;background:#e1e1e1;border:1px solid #adadad"></div>
<svg class="abs" style="left:1402px;top:458px" width="32" height="32" viewBox="0 0 32 32"><g fill="#22c32e" stroke="#0f7a18" stroke-width=".6"><rect x="7.500" y="6" width="3.800" height="4.500"/><rect x="14.500" y="6" width="3.800" height="4.500"/><rect x="21.500" y="5.800" width="3.800" height="4.700"/><rect x="7.500" y="24" width="3.800" height="4.300"/><rect x="14.500" y="24" width="3.800" height="4.300"/><rect x="21.500" y="24" width="3.800" height="4.300"/></g><rect x="4.200" y="10.200" width="24" height="14.300" rx="1.500" fill="#fff" stroke="#8a8a8a" stroke-width=".8"/><path d="M4.200 15.500a2 2 0 0 1 0 4" fill="#ddd" stroke="#9a9a9a" stroke-width=".6"/><path d="M4 4c6-3 13-1 16 4l2.500-2 .5 9-9-1.500 2.500-2c-2.500-4-7-5-11-4z" fill="#62cf22" stroke="#2b7a0b" stroke-width=".8" stroke-linejoin="round"/></svg>
<svg class="abs" style="left:1402px;top:497px" width="32" height="32" viewBox="0 0 32 32"><g fill="#dcdcdc" stroke="#555" stroke-width=".7"><rect x="7" y="3" width="4" height="4"/><rect x="14" y="3" width="4" height="4"/><rect x="21" y="3" width="4" height="4"/></g><rect x="3.500" y="6" width="25" height="17" rx="1.500" fill="#5c5c5c" stroke="#333" stroke-width=".8"/><path d="M3.500 12a2.500 2.500 0 0 1 0 5" fill="#222"/><path d="M16 10l9-1.500 4 1.500v9l-4.500 2-8.500-1.500z" fill="#3d74c4" stroke="#1c3f78" stroke-width=".7"/><path d="M16 10l8.500 1.500v9.500l-8.500-1.500z" fill="#2b5aa6"/><path d="M16 10l9-1.500 4 1.500-4.500 1.500z" fill="#7fb0ea"/><path d="M7 21c5-2.500 11-2 15 2.500l2-2.500 2.500 9.500-10-1 2.500-2.500c-3-3.500-8-3.500-11-1.500z" fill="#62cf22" stroke="#2b7a0b" stroke-width=".8" stroke-linejoin="round"/></svg>
<svg class="abs" style="left:1400px;top:536px" width="36" height="32" viewBox="0 0 36 32"><path d="M3 18l17-8.500 14 4.500v7l-17 9.500-14-5.500z" fill="#f0a800" stroke="#8a5a00" stroke-width=".8" stroke-linejoin="round"/><path d="M3 18l14 5.500 17-9.500-14-4.500z" fill="#ffd21e" stroke="#8a5a00" stroke-width=".8" stroke-linejoin="round"/><path d="M17 23.500v7.500" stroke="#8a5a00" stroke-width=".8"/><path d="M15 16l6-3 5 1.700-6 3z" fill="none" stroke="#c79000" stroke-width=".8"/><path d="M9 18.500l3-1.500" stroke="#c79000"/><path d="M2 4c6-3.500 12-2 16 3.500l2.500-2-.5 9.500-8.500-3 2.500-2c-2.500-4-7-5-11-3.500z" fill="#62cf22" stroke="#2b7a0b" stroke-width=".8" stroke-linejoin="round"/></svg>
<svg class="abs" style="left:1402px;top:574px" width="32" height="32" viewBox="0 0 32 32"><defs><linearGradient id="cy4" x1="0" y1="0" x2="1" y2="0"><stop offset="0" stop-color="#f7e64a"/><stop offset=".5" stop-color="#fff27a"/><stop offset="1" stop-color="#d1b400"/></linearGradient></defs><path d="M6 7v17a9.500 4 0 0 0 19 0V7z" fill="url(#cy4)" stroke="#8f7a00" stroke-width=".8"/><ellipse cx="15.500" cy="7" rx="9.500" ry="4" fill="#fbea55" stroke="#8f7a00" stroke-width=".8"/><path d="M9 22c5-2.500 11-2 15 2.500l2-2.500 2.500 9.500-10-1 2.500-2.500c-3-3.500-8-3.500-11-1.500z" fill="#62cf22" stroke="#2b7a0b" stroke-width=".8" stroke-linejoin="round"/></svg>
<svg class="abs" style="left:1405px;top:615px" width="26" height="26" viewBox="0 0 26 26"><rect x=".500" y=".500" width="24" height="24" rx="1.500" fill="#f2f2f2" stroke="#d0d0d0"/><path d="M4 4h17" stroke="#d8d8d8"/><path d="M4.500 9l4.500-4.500 11 10.500 1.500 6.500-6-2z" fill="#e3b912" stroke="#7a6000" stroke-width=".8" stroke-linejoin="round"/><path d="M6 7.500l11.500 11M7.500 6l11.500 11" stroke="#8a6d00" stroke-width=".8"/><path d="M15.500 19.500l4.500-4.500 1.500 6.500z" fill="#f2d9b0" stroke="#7a6000" stroke-width=".6"/><path d="M19.800 19.200l1.700 2.300-2.800-.8z" fill="#222"/></svg>
<div class="abs" style="left:275.5px;top:730px;width:112.5px;height:19px;border-right:1px solid #dcdcdc;border-left:1px solid #dcdcdc;"></div>
<svg class="abs" style="left:284.7px;top:730.5px" width="16" height="16" viewBox="0 0 18 18">
<path d="M2 1.400h9v3.700H6.400v2.400h3.400v3.300H6.400v5.900H2z" fill="#e0161e" stroke="#6e090d" stroke-width=".7"/><path d="M2.300 1.700h1.300v14.700h-1.300z" fill="#9a0c12"/>
<g transform="translate(12,11)"><circle r="4.100" fill="#4a6fae"/><g fill="#4a6fae"><rect x="-1.300" y="-5.800" width="2.600" height="11.600"/><rect x="-1.300" y="-5.800" width="2.600" height="11.600" transform="rotate(45)"/><rect x="-1.300" y="-5.800" width="2.600" height="11.600" transform="rotate(90)"/><rect x="-1.300" y="-5.800" width="2.600" height="11.600" transform="rotate(135)"/></g><circle r="1.700" fill="#fff"/></g></svg>
<div class="t tah" style="top:734.42px;left:304.20px;font-size:11.2px;letter-spacing:-0.068px;">Start page</div>
<svg class="abs" style="left:360.5px;top:733px" width="14" height="13" viewBox="0 0 14 13"><rect x=".5" y=".5" width="13" height="12" rx="1.800" fill="#c9c9c9" stroke="#a2a2a2"/><path d="M4.200 3.700l5.600 5.600M9.800 3.700l-5.600 5.600" stroke="#fff" stroke-width="1.900"/></svg>
<div class="abs" style="left:388px;top:730px;width:154px;height:19px;border-right:1px solid #dcdcdc;"></div>
<svg class="abs" style="left:399.5px;top:730.5px" width="16" height="16" viewBox="0 0 18 18">
<path d="M2 1.400h9v3.700H6.400v2.400h3.400v3.300H6.400v5.900H2z" fill="#e0161e" stroke="#6e090d" stroke-width=".7"/><path d="M2.300 1.700h1.300v14.700h-1.300z" fill="#9a0c12"/>
<g transform="translate(12,11)"><circle r="4.100" fill="#4a6fae"/><g fill="#4a6fae"><rect x="-1.300" y="-5.800" width="2.600" height="11.600"/><rect x="-1.300" y="-5.800" width="2.600" height="11.600" transform="rotate(45)"/><rect x="-1.300" y="-5.800" width="2.600" height="11.600" transform="rotate(90)"/><rect x="-1.300" y="-5.800" width="2.600" height="11.600" transform="rotate(135)"/></g><circle r="1.700" fill="#fff"/></g></svg>
<div class="t tah" style="top:734.42px;left:419.00px;font-size:11.2px;letter-spacing:-0.193px;">Doorbell Holder : 1</div>
<svg class="abs" style="left:514.0px;top:733px" width="14" height="13" viewBox="0 0 14 13"><rect x=".5" y=".5" width="13" height="12" rx="1.800" fill="#c9c9c9" stroke="#a2a2a2"/><path d="M4.200 3.700l5.600 5.600M9.800 3.700l-5.600 5.600" stroke="#fff" stroke-width="1.900"/></svg>
<div class="abs" style="left:542px;top:730px;width:137px;height:19px;border-right:1px solid #dcdcdc;"></div>
<svg class="abs" style="left:552.5px;top:730.5px" width="16" height="16" viewBox="0 0 18 18">
<path d="M2 1.400h9v3.700H6.400v2.400h3.400v3.300H6.400v5.900H2z" fill="#e0161e" stroke="#6e090d" stroke-width=".7"/><path d="M2.300 1.700h1.300v14.700h-1.300z" fill="#9a0c12"/>
<g transform="translate(12,11)"><circle r="4.100" fill="#4a6fae"/><g fill="#4a6fae"><rect x="-1.300" y="-5.800" width="2.600" height="11.600"/><rect x="-1.300" y="-5.800" width="2.600" height="11.600" transform="rotate(45)"/><rect x="-1.300" y="-5.800" width="2.600" height="11.600" transform="rotate(90)"/><rect x="-1.300" y="-5.800" width="2.600" height="11.600" transform="rotate(135)"/></g><circle r="1.700" fill="#fff"/></g></svg>
<div class="t tah" style="top:734.42px;left:572.00px;font-size:11.2px;letter-spacing:-0.055px;">Unnamed1 : 1*</div>
<svg class="abs" style="left:651.3px;top:733px" width="14" height="13" viewBox="0 0 14 13"><rect x=".5" y=".5" width="13" height="12" rx="1.800" fill="#c9c9c9" stroke="#a2a2a2"/><path d="M4.200 3.700l5.600 5.600M9.800 3.700l-5.600 5.600" stroke="#fff" stroke-width="1.900"/></svg>
<div class="abs" style="left:679px;top:730px;width:159px;height:19px;border-right:1px solid #dcdcdc;"></div>
<svg class="abs" style="left:689.5px;top:730.5px" width="16" height="16" viewBox="0 0 18 18">
<path d="M2 1.400h9v3.700H6.400v2.400h3.400v3.300H6.400v5.900H2z" fill="#e0161e" stroke="#6e090d" stroke-width=".7"/><path d="M2.300 1.700h1.300v14.700h-1.300z" fill="#9a0c12"/>
<g transform="translate(12,11)"><circle r="4.100" fill="#4a6fae"/><g fill="#4a6fae"><rect x="-1.300" y="-5.800" width="2.600" height="11.600"/><rect x="-1.300" y="-5.800" width="2.600" height="11.600" transform="rotate(45)"/><rect x="-1.300" y="-5.800" width="2.600" height="11.600" transform="rotate(90)"/><rect x="-1.300" y="-5.800" width="2.600" height="11.600" transform="rotate(135)"/></g><circle r="1.700" fill="#fff"/></g></svg>
<div class="t tah" style="top:734.42px;left:709.00px;font-size:11.2px;letter-spacing:-0.000px;">tomu_0.4_case : 1*</div>
<svg class="abs" style="left:810.8px;top:733px" width="14" height="13" viewBox="0 0 14 13"><rect x=".5" y=".5" width="13" height="12" rx="1.800" fill="#c9c9c9" stroke="#a2a2a2"/><path d="M4.200 3.700l5.600 5.600M9.800 3.700l-5.600 5.600" stroke="#fff" stroke-width="1.900"/></svg>
<div class="abs" style="left:838px;top:730px;width:137px;height:19px;border-right:1px solid #dcdcdc;"></div>
<svg class="abs" style="left:848.5px;top:730.5px" width="16" height="16" viewBox="0 0 18 18">
<path d="M2 1.400h9v3.700H6.400v2.400h3.400v3.300H6.400v5.900H2z" fill="#e0161e" stroke="#6e090d" stroke-width=".7"/><path d="M2.300 1.700h1.300v14.700h-1.300z" fill="#9a0c12"/>
<g transform="translate(12,11)"><circle r="4.100" fill="#4a6fae"/><g fill="#4a6fae"><rect x="-1.300" y="-5.800" width="2.600" height="11.600"/><rect x="-1.300" y="-5.800" width="2.600" height="11.600" transform="rotate(45)"/><rect x="-1.300" y="-5.800" width="2.600" height="11.600" transform="rotate(90)"/><rect x="-1.300" y="-5.800" width="2.600" height="11.600" transform="rotate(135)"/></g><circle r="1.700" fill="#fff"/></g></svg>
<div class="t tah" style="top:734.42px;left:868.00px;font-size:11.2px;letter-spacing:-0.055px;">Unnamed2 : 1*</div>
<svg class="abs" style="left:947.3px;top:733px" width="14" height="13" viewBox="0 0 14 13"><rect x=".5" y=".5" width="13" height="12" rx="1.800" fill="#c9c9c9" stroke="#a2a2a2"/><path d="M4.200 3.700l5.600 5.600M9.800 3.700l-5.600 5.600" stroke="#fff" stroke-width="1.900"/></svg>
<div class="abs" style="left:975px;top:730px;width:137px;height:19px;border-right:1px solid #dcdcdc;"></div>
<svg class="abs" style="left:985.5px;top:730.5px" width="16" height="16" viewBox="0 0 18 18">
<path d="M2 1.400h9v3.700H6.400v2.400h3.400v3.300H6.400v5.900H2z" fill="#e0161e" stroke="#6e090d" stroke-width=".7"/><path d="M2.300 1.700h1.300v14.700h-1.300z" fill="#9a0c12"/>
<g transform="translate(12,11)"><circle r="4.100" fill="#4a6fae"/><g fill="#4a6fae"><rect x="-1.300" y="-5.800" width="2.600" height="11.600"/><rect x="-1.300" y="-5.800" width="2.600" height="11.600" transform="rotate(45)"/><rect x="-1.300" y="-5.800" width="2.600" height="11.600" transform="rotate(90)"/><rect x="-1.300" y="-5.800" width="2.600" height="11.600" transform="rotate(135)"/></g><circle r="1.700" fill="#fff"/></g></svg>
<div class="t tah" style="top:734.42px;left:1005.00px;font-size:11.2px;letter-spacing:-0.055px;">Unnamed3 : 1*</div>
<svg class="abs" style="left:1084.3px;top:733px" width="14" height="13" viewBox="0 0 14 13"><rect x=".5" y=".5" width="13" height="12" rx="1.800" fill="#c9c9c9" stroke="#a2a2a2"/><path d="M4.200 3.700l5.600 5.600M9.800 3.700l-5.600 5.600" stroke="#fff" stroke-width="1.900"/></svg>
<div class="abs" style="left:1110px;top:728px;width:139px;height:23.5px;background:#fff;border:1px solid #e3e3e3;border-top:none"></div>
<svg class="abs" style="left:1123.5px;top:731.5px" width="16" height="16" viewBox="0 0 18 18">
<path d="M2 1.400h9v3.700H6.400v2.400h3.400v3.300H6.400v5.900H2z" fill="#e0161e" stroke="#6e090d" stroke-width=".7"/><path d="M2.300 1.700h1.300v14.700h-1.300z" fill="#9a0c12"/>
<g transform="translate(12,11)"><circle r="4.100" fill="#4a6fae"/><g fill="#4a6fae"><rect x="-1.300" y="-5.800" width="2.600" height="11.600"/><rect x="-1.300" y="-5.800" width="2.600" height="11.600" transform="rotate(45)"/><rect x="-1.300" y="-5.800" width="2.600" height="11.600" transform="rotate(90)"/><rect x="-1.300" y="-5.800" width="2.600" height="11.600" transform="rotate(135)"/></g><circle r="1.700" fill="#fff"/></g></svg>
<div class="t tah" style="top:735.42px;left:1143.00px;font-size:11.2px;letter-spacing:-0.055px;">Unnamed4 : 1*</div>
<svg class="abs" style="left:1222.3px;top:734px" width="14" height="13" viewBox="0 0 14 13"><rect x=".5" y=".5" width="13" height="12" rx="1.800" fill="#e5603c" stroke="#b8401f"/><path d="M4.200 3.700l5.600 5.600M9.800 3.700l-5.600 5.600" stroke="#fff" stroke-width="1.900"/></svg>
<div class="abs" style="left:275px;top:748.5px;width:835px;height:1px;background:#dcdcdc"></div>
<div class="abs" style="left:1px;top:757px;width:1443px;height:19px;background:#dcdcdc;border:1px solid #bebebe"></div>
<div class="t tah" style="top:762.42px;left:2.50px;font-size:11.2px;letter-spacing:-0.327px;">Python console</div>
<svg class="abs" style="left:1415px;top:762px" width="9" height="10" viewBox="0 0 9 10"><rect x="2.7" y=".6" width="4.800" height="4.600" fill="none" stroke="#000" stroke-width="1"/><rect x="2.200" y=".1" width="5.800" height="2" fill="#000"/><rect x=".5" y="3.800" width="4.800" height="4.600" fill="#e8e8e8" stroke="#000" stroke-width="1"/><rect x="0" y="3.300" width="5.800" height="2" fill="#000"/></svg>
<svg class="abs" style="left:1430.5px;top:762.7px" width="9" height="8" viewBox="0 0 9 8"><path d="M.8 .6l7.200 6.600M8 .6l-7.200 6.600" stroke="#000" stroke-width="1.700" fill="none"/></svg>
<div class="abs" style="left:1px;top:778px;width:1443px;height:104px;background:#fff;border:1px solid #828790"></div>
<div class="t mono" style="top:781.68px;left:6.00px;font-size:13.33px;white-space:pre;"><span class="g">&gt;&gt;&gt; </span>App<span class="g">.</span>setActiveDocument<span class="g">(</span><span class="r">"Unnamed3"</span><span class="g">)</span></div>
<div class="t mono" style="top:797.68px;left:6.00px;font-size:13.33px;white-space:pre;"><span class="g">&gt;&gt;&gt; </span>App<span class="g">.</span>ActiveDocument<span class="g">=</span>App<span class="g">.</span>getDocument<span class="g">(</span><span class="r">"Unnamed3"</span><span class="g">)</span></div>
<div class="t mono" style="top:813.68px;left:6.00px;font-size:13.33px;white-space:pre;"><span class="g">&gt;&gt;&gt; </span>Gui<span class="g">.</span>ActiveDocument<span class="g">=</span>Gui<span class="g">.</span>getDocument<span class="g">(</span><span class="r">"Unnamed3"</span><span class="g">)</span></div>
<div class="t mono" style="top:829.68px;left:6.00px;font-size:13.33px;white-space:pre;"><span class="g">&gt;&gt;&gt; </span>Gui<span class="g">.</span>SendMsgToActiveView<span class="g">(</span><span class="r">"ViewFit"</span><span class="g">)</span></div>
<div class="t mono" style="top:845.68px;left:6.00px;font-size:13.33px;white-space:pre;"><span class="g">&gt;&gt;&gt; </span>Gui<span class="g">.</span>activeDocument<span class="g">().</span>activeView<span class="g">().</span>viewAxonometric<span class="g">()</span></div>
<div class="t mono" style="top:861.68px;left:6.00px;font-size:13.33px;white-space:pre;"><span class="g">&gt;&gt;&gt; </span></div>
<div class="abs" style="left:1427px;top:779px;width:16px;height:102px;background:#f0f0f0"></div>
<div class="abs" style="left:1427px;top:846px;width:16px;height:18px;background:#cdcdcd"></div>
<svg class="abs" style="left:1427px;top:779px" width="16" height="102" viewBox="0 0 16 102" fill="none" stroke="#505050" stroke-width="1.600"><path d="M4.500 11.500l3.500-3.500 3.500 3.500M4.500 91.500l3.500 3.500 3.500-3.500"/></svg>
<div class="t ui" style="top:891.49px;left:7.00px;font-size:12.3px;letter-spacing:-0.370px;">Valid, Internal name: Part__Feature</div>
<svg class="abs" style="left:1235px;top:889px" width="9" height="14" viewBox="0 0 9 14" fill="none" stroke="#222" stroke-width="1.200"><rect x=".8" y=".8" width="7.400" height="12.400" rx="3.200"/><path d="M4.500 3v3.200"/></svg>
<div class="t ui" style="top:891.49px;left:1251.60px;font-size:12.3px;letter-spacing:-1.157px;">CAD</div>
<div class="dd" style="left:1277px;top:895px"></div>
<div class="abs" style="left:1291px;top:886px;width:1px;height:22px;background:#d7d7d7"></div>
<div class="t ui" style="top:891.49px;left:1297.30px;font-size:12.3px;letter-spacing:-0.478px;">630.91 mm x 327.14 mm</div>
<div class="abs" style="left:1425px;top:886px;width:1px;height:22px;background:#d7d7d7"></div>
<svg class="abs" style="left:1431px;top:898px" width="12" height="12" viewBox="0 0 12 12" fill="#bfbfbf"><rect x="9" y="1" width="2" height="2"/><rect x="5" y="5" width="2" height="2"/><rect x="9" y="5" width="2" height="2"/><rect x="1" y="9" width="2" height="2"/><rect x="5" y="9" width="2" height="2"/><rect x="9" y="9" width="2" height="2"/></svg>

</body>
</html>
